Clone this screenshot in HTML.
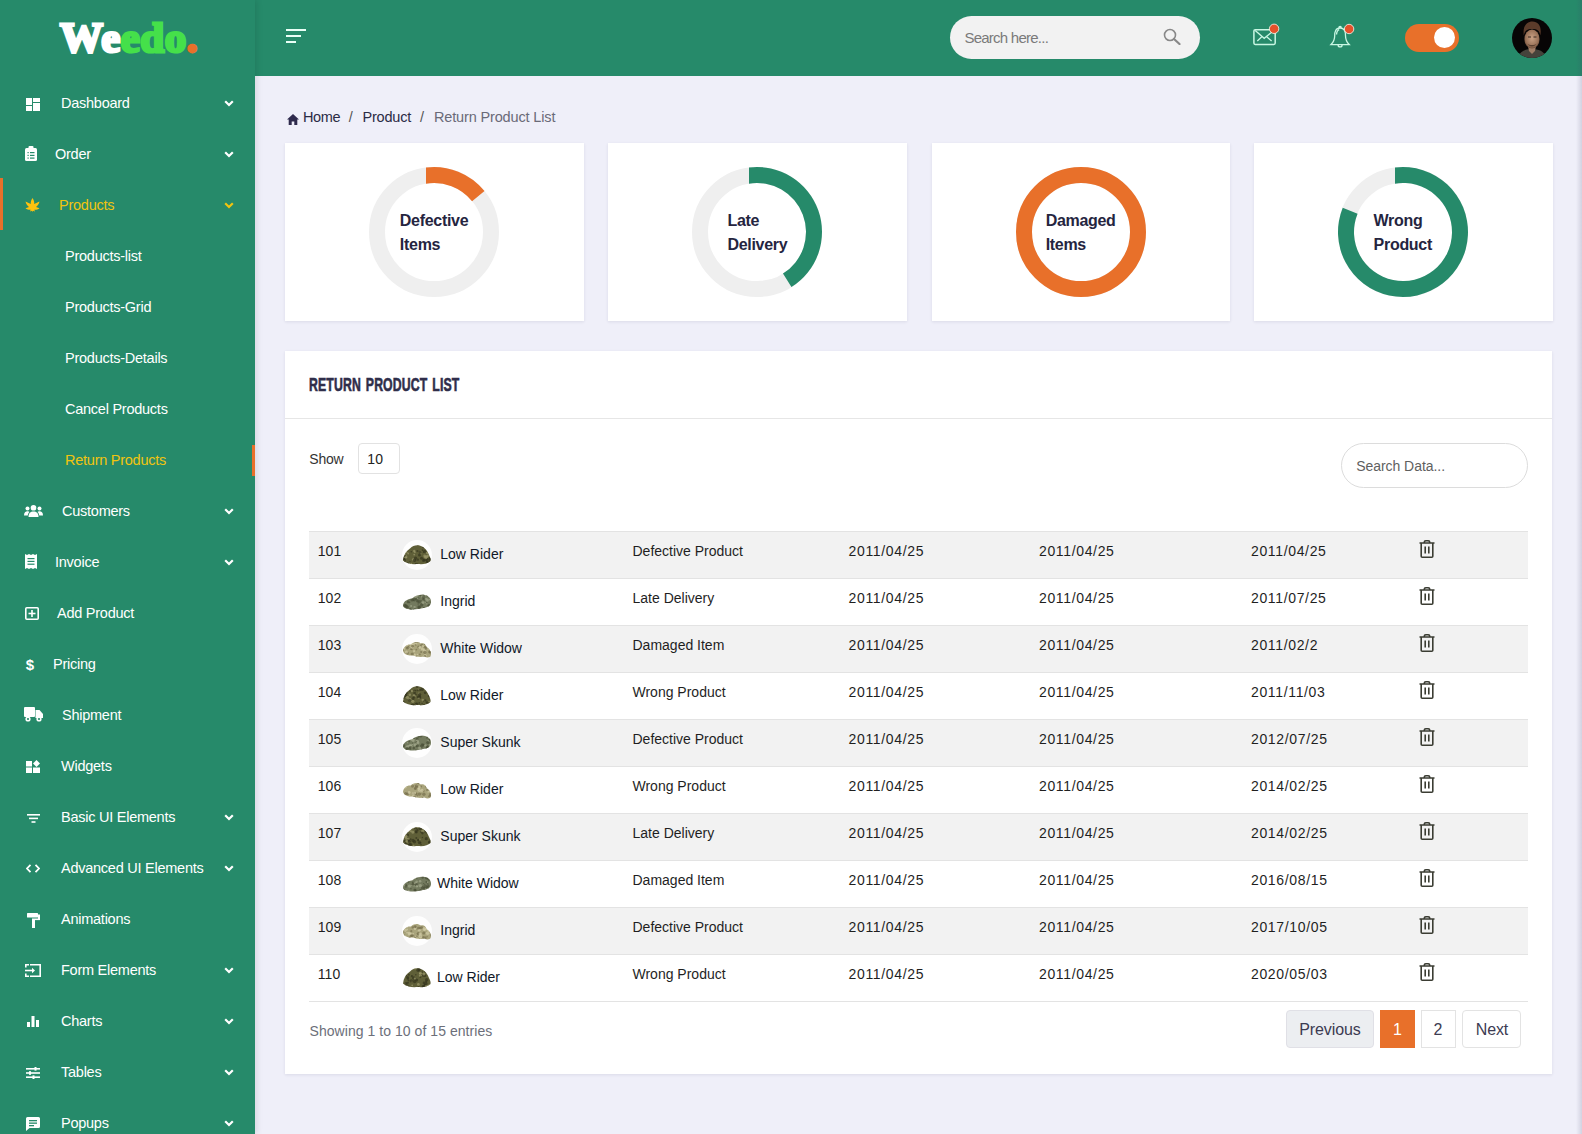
<!DOCTYPE html><html><head><meta charset="utf-8"><style>
*{margin:0;padding:0;box-sizing:border-box}
html,body{width:1582px;height:1134px;overflow:hidden;background:#efeff9;font-family:"Liberation Sans",sans-serif}
.abs,.t,.ic,.card{position:absolute}
.t{line-height:1;white-space:nowrap}
#side{position:absolute;left:0;top:0;width:255px;height:1134px;background:#268a6a;box-shadow:2px 0 6px rgba(0,0,0,0.10);z-index:2}
#head{position:absolute;left:255px;top:0;width:1327px;height:76px;background:#268a6a}
#head + *{}
.card{background:#fff;box-shadow:0 1px 3px rgba(40,40,80,0.10)}
.logo{position:absolute;left:60px;top:16px;font-family:"Liberation Serif",serif;font-weight:700;font-size:43px;line-height:1;white-space:nowrap;transform-origin:0 0;letter-spacing:0.5px}
.logo span{-webkit-text-stroke:3px currentColor}
.dl{font-size:16px;font-weight:700;color:#25253f;line-height:24px;letter-spacing:-0.3px}
.title{font-size:17.5px;font-weight:700;color:#2f2e4a;line-height:1;transform:scaleX(0.70);transform-origin:0 0;letter-spacing:0.2px;word-spacing:2px;-webkit-text-stroke:0.6px #2f2e4a}
</style></head><body><div id="side">
<div class="logo"><span style="color:#fff">We</span><span style="color:#45e04a">edo</span><span style="color:#e8702a">.</span></div>
<div class="t" style="left:61.0px;top:95.83px;font-size:14.5px;color:#ffffff;font-weight:400;letter-spacing:-0.25px;font-family:"Liberation Sans", sans-serif;-webkit-text-stroke:0.65px #ffffff;">Dashboard</div>
<svg class="ic" width="14" height="13" viewBox="0 0 14 13" style="left:26px;top:98px"><rect x="0" y="0" width="6" height="7" fill="#fff"/><rect x="7" y="0" width="7" height="4" fill="#fff"/><rect x="0" y="8" width="6" height="5" fill="#fff"/><rect x="7" y="5" width="7" height="8" fill="#fff"/></svg>
<svg class="ic" width="10" height="7" viewBox="0 0 10 7" style="left:223.5px;top:99.5px"><path d="M1.2 1.2 L5 5 L8.8 1.2" fill="none" stroke="#ffffff" stroke-width="2.2"/></svg>
<div class="t" style="left:55.0px;top:146.83px;font-size:14.5px;color:#ffffff;font-weight:400;letter-spacing:-0.25px;font-family:"Liberation Sans", sans-serif;-webkit-text-stroke:0.65px #ffffff;">Order</div>
<svg class="ic" width="12" height="15" viewBox="0 0 12 15" style="left:24.5px;top:146px"><rect x="0" y="2" width="12" height="13" rx="1.5" fill="#fff"/><rect x="3.5" y="0" width="5" height="3.5" rx="1" fill="#fff"/><g fill="#268a6a"><rect x="2.5" y="6" width="1.2" height="1.2"/><rect x="5" y="6" width="4.5" height="1.2"/><rect x="2.5" y="8.8" width="1.2" height="1.2"/><rect x="5" y="8.8" width="4.5" height="1.2"/><rect x="2.5" y="11.5" width="1.2" height="1.2"/><rect x="5" y="11.5" width="4.5" height="1.2"/></g></svg>
<svg class="ic" width="10" height="7" viewBox="0 0 10 7" style="left:223.5px;top:150.5px"><path d="M1.2 1.2 L5 5 L8.8 1.2" fill="none" stroke="#ffffff" stroke-width="2.2"/></svg>
<div class="t" style="left:59.0px;top:197.83px;font-size:14.5px;color:#f1c40f;font-weight:400;letter-spacing:-0.25px;font-family:"Liberation Sans", sans-serif;-webkit-text-stroke:0.65px #f1c40f;">Products</div>
<svg class="ic" width="15" height="14" viewBox="0 0 15 14" style="left:24.5px;top:197.7px"><path fill="#ffc20e" d="M7.5 0 C8.8 2 9.5 4 9.2 6 L14.5 3.5 C14 6 12.5 8 11 9 L14.5 10.2 C13 11.5 11 12 9.3 11.8 L10 13.6 L8 12.8 L7.5 14 L7 12.8 L5 13.6 L5.7 11.8 C4 12 2 11.5 0.5 10.2 L4 9 C2.5 8 1 6 0.5 3.5 L5.8 6 C5.5 4 6.2 2 7.5 0Z"/></svg>
<svg class="ic" width="10" height="7" viewBox="0 0 10 7" style="left:223.5px;top:201.5px"><path d="M1.2 1.2 L5 5 L8.8 1.2" fill="none" stroke="#f1c40f" stroke-width="2.2"/></svg>
<div class="abs" style="left:0;top:178px;width:3px;height:52px;background:#e8702a"></div>
<div class="t" style="left:65.0px;top:248.83px;font-size:14.5px;color:#ffffff;font-weight:400;letter-spacing:-0.25px;font-family:"Liberation Sans", sans-serif;-webkit-text-stroke:0.65px #ffffff;">Products-list</div>
<div class="t" style="left:65.0px;top:299.83px;font-size:14.5px;color:#ffffff;font-weight:400;letter-spacing:-0.25px;font-family:"Liberation Sans", sans-serif;-webkit-text-stroke:0.65px #ffffff;">Products-Grid</div>
<div class="t" style="left:65.0px;top:350.83px;font-size:14.5px;color:#ffffff;font-weight:400;letter-spacing:-0.25px;font-family:"Liberation Sans", sans-serif;-webkit-text-stroke:0.65px #ffffff;">Products-Details</div>
<div class="t" style="left:65.0px;top:401.83px;font-size:14.5px;color:#ffffff;font-weight:400;letter-spacing:-0.25px;font-family:"Liberation Sans", sans-serif;-webkit-text-stroke:0.65px #ffffff;">Cancel Products</div>
<div class="t" style="left:65.0px;top:452.83px;font-size:14.5px;color:#f1c40f;font-weight:400;letter-spacing:-0.25px;font-family:"Liberation Sans", sans-serif;-webkit-text-stroke:0.65px #f1c40f;">Return Products</div>
<div class="abs" style="left:252px;top:445px;width:3px;height:31px;background:#e8702a"></div>
<div class="t" style="left:62.0px;top:503.83px;font-size:14.5px;color:#ffffff;font-weight:400;letter-spacing:-0.25px;font-family:"Liberation Sans", sans-serif;-webkit-text-stroke:0.65px #ffffff;">Customers</div>
<svg class="ic" width="19" height="12" viewBox="0 0 19 12" style="left:24px;top:505px"><g fill="#fff"><circle cx="9.5" cy="2.8" r="2.8"/><circle cx="3.5" cy="3.5" r="2"/><circle cx="15.5" cy="3.5" r="2"/><path d="M4.5 12 C4.5 8 6.5 6.5 9.5 6.5 C12.5 6.5 14.5 8 14.5 12Z"/><path d="M0 10.5 C0 7.5 1.5 6.3 3.5 6.3 C4.5 6.3 5 6.6 5.5 7 C4.3 8 3.8 9.5 3.8 10.5Z"/><path d="M19 10.5 C19 7.5 17.5 6.3 15.5 6.3 C14.5 6.3 14 6.6 13.5 7 C14.7 8 15.2 9.5 15.2 10.5Z"/></g></svg>
<svg class="ic" width="10" height="7" viewBox="0 0 10 7" style="left:223.5px;top:507.5px"><path d="M1.2 1.2 L5 5 L8.8 1.2" fill="none" stroke="#ffffff" stroke-width="2.2"/></svg>
<div class="t" style="left:55.0px;top:554.83px;font-size:14.5px;color:#ffffff;font-weight:400;letter-spacing:-0.25px;font-family:"Liberation Sans", sans-serif;-webkit-text-stroke:0.65px #ffffff;">Invoice</div>
<svg class="ic" width="12" height="15" viewBox="0 0 12 15" style="left:24.5px;top:554.3px"><path fill="#fff" d="M0 0 L2 1 L4 0 L6 1 L8 0 L10 1 L12 0 L12 15 L10 14 L8 15 L6 14 L4 15 L2 14 L0 15Z"/><g fill="#268a6a"><rect x="2.5" y="4" width="7" height="1.2"/><rect x="2.5" y="6.8" width="7" height="1.2"/><rect x="2.5" y="9.6" width="7" height="1.2"/></g></svg>
<svg class="ic" width="10" height="7" viewBox="0 0 10 7" style="left:223.5px;top:558.5px"><path d="M1.2 1.2 L5 5 L8.8 1.2" fill="none" stroke="#ffffff" stroke-width="2.2"/></svg>
<div class="t" style="left:57.0px;top:605.83px;font-size:14.5px;color:#ffffff;font-weight:400;letter-spacing:-0.25px;font-family:"Liberation Sans", sans-serif;-webkit-text-stroke:0.65px #ffffff;">Add Product</div>
<svg class="ic" width="14" height="13" viewBox="0 0 14 13" style="left:24.5px;top:606.7px"><rect x="0.8" y="0.8" width="12.4" height="11.4" rx="1" fill="none" stroke="#fff" stroke-width="1.6"/><rect x="6.2" y="3" width="1.6" height="7" fill="#fff"/><rect x="3.5" y="5.7" width="7" height="1.6" fill="#fff"/></svg>
<div class="t" style="left:53.0px;top:656.83px;font-size:14.5px;color:#ffffff;font-weight:400;letter-spacing:-0.25px;font-family:"Liberation Sans", sans-serif;-webkit-text-stroke:0.65px #ffffff;">Pricing</div>
<svg class="ic" width="10" height="14" viewBox="0 0 10 14" style="left:24.5px;top:657px"><text x="5" y="12.5" text-anchor="middle" font-family="Liberation Sans" font-weight="700" font-size="15" fill="#fff">$</text></svg>
<div class="t" style="left:62.0px;top:707.83px;font-size:14.5px;color:#ffffff;font-weight:400;letter-spacing:-0.25px;font-family:"Liberation Sans", sans-serif;-webkit-text-stroke:0.65px #ffffff;">Shipment</div>
<svg class="ic" width="19" height="15" viewBox="0 0 19 15" style="left:24px;top:707.2px"><g fill="#fff"><rect x="0" y="0" width="11" height="10" rx="1"/><path d="M11.5 3 L15.5 3 L19 7 L19 11 L11.5 11Z"/><circle cx="4" cy="12" r="2.6"/><circle cx="15" cy="12" r="2.6"/></g><circle cx="4" cy="12" r="1.1" fill="#268a6a"/><circle cx="15" cy="12" r="1.1" fill="#268a6a"/></svg>
<div class="t" style="left:61.0px;top:758.83px;font-size:14.5px;color:#ffffff;font-weight:400;letter-spacing:-0.25px;font-family:"Liberation Sans", sans-serif;-webkit-text-stroke:0.65px #ffffff;">Widgets</div>
<svg class="ic" width="14" height="13" viewBox="0 0 14 13" style="left:26px;top:760px"><g fill="#fff"><rect x="0" y="1" width="6" height="5.5"/><rect x="0" y="7.5" width="6" height="5.5"/><rect x="7" y="7.5" width="7" height="5.5"/><path d="M10.5 0 L14 3.5 L10.5 7 L7 3.5Z"/></g></svg>
<div class="t" style="left:61.0px;top:809.83px;font-size:14.5px;color:#ffffff;font-weight:400;letter-spacing:-0.25px;font-family:"Liberation Sans", sans-serif;-webkit-text-stroke:0.65px #ffffff;">Basic UI Elements</div>
<svg class="ic" width="13" height="9" viewBox="0 0 13 9" style="left:26.5px;top:813.6px"><g fill="#fff"><rect x="0" y="0" width="13" height="1.6"/><rect x="2" y="3.6" width="9" height="1.6"/><rect x="4.5" y="7.2" width="4" height="1.6"/></g></svg>
<svg class="ic" width="10" height="7" viewBox="0 0 10 7" style="left:223.5px;top:813.5px"><path d="M1.2 1.2 L5 5 L8.8 1.2" fill="none" stroke="#ffffff" stroke-width="2.2"/></svg>
<div class="t" style="left:61.0px;top:860.83px;font-size:14.5px;color:#ffffff;font-weight:400;letter-spacing:-0.25px;font-family:"Liberation Sans", sans-serif;-webkit-text-stroke:0.65px #ffffff;">Advanced UI Elements</div>
<svg class="ic" width="14" height="9" viewBox="0 0 14 9" style="left:26px;top:864.3px"><path d="M4.5 0.8 L1 4.5 L4.5 8.2 M9.5 0.8 L13 4.5 L9.5 8.2" fill="none" stroke="#fff" stroke-width="1.8"/></svg>
<svg class="ic" width="10" height="7" viewBox="0 0 10 7" style="left:223.5px;top:864.5px"><path d="M1.2 1.2 L5 5 L8.8 1.2" fill="none" stroke="#ffffff" stroke-width="2.2"/></svg>
<div class="t" style="left:61.0px;top:911.83px;font-size:14.5px;color:#ffffff;font-weight:400;letter-spacing:-0.25px;font-family:"Liberation Sans", sans-serif;-webkit-text-stroke:0.65px #ffffff;">Animations</div>
<svg class="ic" width="13" height="15" viewBox="0 0 13 15" style="left:26.8px;top:912.6px"><g fill="#fff"><rect x="0" y="0" width="11" height="4.5" rx="0.5"/><rect x="11" y="1.5" width="2" height="5"/><rect x="5" y="5.5" width="8" height="1.6"/><rect x="5" y="6" width="3" height="9"/></g></svg>
<div class="t" style="left:61.0px;top:962.83px;font-size:14.5px;color:#ffffff;font-weight:400;letter-spacing:-0.25px;font-family:"Liberation Sans", sans-serif;-webkit-text-stroke:0.65px #ffffff;">Form Elements</div>
<svg class="ic" width="16" height="13" viewBox="0 0 16 13" style="left:25px;top:964px"><path d="M5 0.8 L15.2 0.8 L15.2 12.2 L5 12.2 M0.8 3.5 L0.8 0.8 L4 0.8 M0.8 9.5 L0.8 12.2 L4 12.2" fill="none" stroke="#fff" stroke-width="1.6"/><path d="M0 6.5 L8 6.5" stroke="#fff" stroke-width="1.6"/><path d="M7 3.8 L10 6.5 L7 9.2Z" fill="#fff"/></svg>
<svg class="ic" width="10" height="7" viewBox="0 0 10 7" style="left:223.5px;top:966.5px"><path d="M1.2 1.2 L5 5 L8.8 1.2" fill="none" stroke="#ffffff" stroke-width="2.2"/></svg>
<div class="t" style="left:61.0px;top:1013.83px;font-size:14.5px;color:#ffffff;font-weight:400;letter-spacing:-0.25px;font-family:"Liberation Sans", sans-serif;-webkit-text-stroke:0.65px #ffffff;">Charts</div>
<svg class="ic" width="13" height="11" viewBox="0 0 13 11" style="left:26.8px;top:1016.3px"><g fill="#fff"><rect x="0" y="6" width="3" height="5"/><rect x="4.5" y="0" width="3" height="11"/><rect x="9" y="4" width="3" height="7"/></g></svg>
<svg class="ic" width="10" height="7" viewBox="0 0 10 7" style="left:223.5px;top:1017.5px"><path d="M1.2 1.2 L5 5 L8.8 1.2" fill="none" stroke="#ffffff" stroke-width="2.2"/></svg>
<div class="t" style="left:61.0px;top:1064.83px;font-size:14.5px;color:#ffffff;font-weight:400;letter-spacing:-0.25px;font-family:"Liberation Sans", sans-serif;-webkit-text-stroke:0.65px #ffffff;">Tables</div>
<svg class="ic" width="14" height="12" viewBox="0 0 14 12" style="left:26px;top:1067.3px"><g fill="#fff"><rect x="0" y="1" width="14" height="1.6"/><rect x="0" y="5.2" width="14" height="1.6"/><rect x="0" y="9.4" width="14" height="1.6"/><rect x="8.5" y="0" width="2" height="3.6"/><rect x="3" y="4.2" width="2" height="3.6"/><rect x="6.5" y="8.4" width="2" height="3.6"/></g></svg>
<svg class="ic" width="10" height="7" viewBox="0 0 10 7" style="left:223.5px;top:1068.5px"><path d="M1.2 1.2 L5 5 L8.8 1.2" fill="none" stroke="#ffffff" stroke-width="2.2"/></svg>
<div class="t" style="left:61.0px;top:1115.83px;font-size:14.5px;color:#ffffff;font-weight:400;letter-spacing:-0.25px;font-family:"Liberation Sans", sans-serif;-webkit-text-stroke:0.65px #ffffff;">Popups</div>
<svg class="ic" width="14" height="14" viewBox="0 0 14 14" style="left:26px;top:1116.9px"><path fill="#fff" d="M1.5 0 L12.5 0 Q14 0 14 1.5 L14 9.5 Q14 11 12.5 11 L3.5 11 L0 14 L0 1.5 Q0 0 1.5 0Z"/><g fill="#268a6a"><rect x="3" y="3" width="8" height="1.3"/><rect x="3" y="5.5" width="8" height="1.3"/><rect x="3" y="8" width="5" height="1.3"/></g></svg>
<svg class="ic" width="10" height="7" viewBox="0 0 10 7" style="left:223.5px;top:1119.5px"><path d="M1.2 1.2 L5 5 L8.8 1.2" fill="none" stroke="#ffffff" stroke-width="2.2"/></svg>
</div>
<div id="head">
<div class="abs" style="left:31px;top:29px;width:20px;height:2px;background:#e9fff6"></div>
<div class="abs" style="left:31px;top:35px;width:15px;height:2px;background:#e9fff6"></div>
<div class="abs" style="left:31px;top:41px;width:10px;height:2px;background:#e9fff6"></div>
</div>
<div class="abs" style="left:950px;top:16px;width:250px;height:43px;border-radius:22px;background:#f2f2f2"></div>
<div class="t" style="left:964.4px;top:30.20px;font-size:15px;color:#7a7a7a;font-weight:400;letter-spacing:-0.75px;font-family:"Liberation Sans", sans-serif;">Search here...</div>
<svg class="ic" width="18" height="17" viewBox="0 0 18 17" style="left:1163px;top:28px"><circle cx="7" cy="7" r="5.5" fill="none" stroke="#888" stroke-width="1.6"/><path d="M11 11 L16.5 16" stroke="#888" stroke-width="2.2" stroke-linecap="round"/></svg>
<svg class="ic" width="30" height="30" viewBox="0 0 30 30" style="left:1250px;top:22px"><rect x="3.9" y="7.8" width="21.3" height="14.6" rx="1.3" fill="none" stroke="#c9f7e3" stroke-width="1.5"/><path d="M5.2 8.6 L14.2 16.3 L22 10 M7.3 19 L11.8 14.8 M21.6 19 L16.7 14.8" fill="none" stroke="#c9f7e3" stroke-width="1.3"/><circle cx="24.1" cy="6.8" r="4.7" fill="#e5512a" stroke="#f3eadf" stroke-width="0.9"/></svg>
<svg class="ic" width="30" height="30" viewBox="0 0 30 30" style="left:1326px;top:22px"><path d="M12.9 6 C12.9 3.8 15.3 3.8 15.3 6 M14.1 6 C9.5 6 8.7 10 8.7 13.5 C8.7 17 7.8 20 5 22.6 L23.2 22.6 C20.4 20 19.5 17 19.5 13.5 C19.5 10 18.7 6 14.1 6Z M12.1 23 C12.1 25.6 16.1 25.6 16.1 23 M10.6 12.5 C10.6 9.8 11.6 8.2 13.2 7.6" fill="none" stroke="#c9f7e3" stroke-width="1.3"/><circle cx="23.1" cy="7" r="4.7" fill="#e5512a" stroke="#f3eadf" stroke-width="0.9"/></svg>
<div class="abs" style="left:1405px;top:24px;width:54px;height:28px;border-radius:14px;background:#e8702a"></div>
<div class="abs" style="left:1434px;top:27px;width:21px;height:21px;border-radius:50%;background:#fff"></div>
<svg class="ic" width="40" height="40" viewBox="0 0 40 40" style="left:1512px;top:18px"><defs><clipPath id="av"><circle cx="20" cy="20" r="20"/></clipPath><radialGradient id="fc" cx="0.5" cy="0.45" r="0.6"><stop offset="0" stop-color="#c9a184"/><stop offset="0.7" stop-color="#9a7258"/><stop offset="1" stop-color="#5a3e2e"/></radialGradient></defs><g clip-path="url(#av)"><rect width="40" height="40" fill="#070505"/><path d="M5 42 C7 33 13 31 20 31 C27 31 33 33 35 42Z" fill="#45423b"/><path d="M16 28 L24 28 L23 33 L20 36 L17 33Z" fill="#a07d66"/><ellipse cx="20" cy="21" rx="7.6" ry="9.6" fill="url(#fc)"/><path d="M11.8 17.5 C10.5 8.5 14.5 3.5 20.5 3.5 C26.5 3.5 30 8.5 28.3 17.5 C27.5 12.5 25.5 11 20 11 C15 11 12.8 12.5 11.8 17.5Z" fill="#5b3b2a"/><path d="M15.5 25.5 C17 29.5 23 29.5 24.5 25.5 C23 27.5 17 27.5 15.5 25.5Z" fill="#5a4030"/><rect x="16" y="18.5" width="3" height="1" fill="#3a2a20"/><rect x="21.5" y="18.5" width="3" height="1" fill="#3a2a20"/></g></svg>
<svg class="ic" width="12" height="11" viewBox="0 0 12 11" style="left:286.5px;top:113.5px"><path d="M6 0 L12 5.5 L10.3 5.5 L10.3 11 L7.3 11 L7.3 7.5 L4.7 7.5 L4.7 11 L1.7 11 L1.7 5.5 L0 5.5Z" fill="#2e2a4d"/></svg>
<div class="t" style="left:302.9px;top:109.73px;font-size:14.5px;color:#2b2b45;font-weight:400;letter-spacing:-0.3px;font-family:"Liberation Sans", sans-serif;">Home</div>
<div class="t" style="left:348.7px;top:109.73px;font-size:14.5px;color:#555;font-weight:400;letter-spacing:0px;font-family:"Liberation Sans", sans-serif;">/</div>
<div class="t" style="left:362.5px;top:109.73px;font-size:14.5px;color:#2b2b45;font-weight:400;letter-spacing:-0.2px;font-family:"Liberation Sans", sans-serif;">Product</div>
<div class="t" style="left:420.0px;top:109.73px;font-size:14.5px;color:#555;font-weight:400;letter-spacing:0px;font-family:"Liberation Sans", sans-serif;">/</div>
<div class="t" style="left:434.0px;top:109.73px;font-size:14.5px;color:#6a6a78;font-weight:400;letter-spacing:-0.15px;font-family:"Liberation Sans", sans-serif;">Return Product List</div>
<div class="card" style="left:285px;top:143px;width:298.75px;height:178px"></div>
<svg class="ic" width="140" height="140" viewBox="0 0 140 140" style="left:364.10px;top:162px"><circle cx="70" cy="70" r="57" fill="none" stroke="#efefef" stroke-width="16"/><path d="M62.00 5.49 A65 65 0 0 1 120.51 29.09 L108.08 39.16 A49 49 0 0 0 62.00 21.66 Z" fill="#e8702a"/></svg>
<div class="t dl" style="left:354.1px;top:208.5px;width:160px;text-align:center"><div style="display:inline-block;text-align:left">Defective<br>Items</div></div>
<div class="card" style="left:608.25px;top:143px;width:298.75px;height:178px"></div>
<svg class="ic" width="140" height="140" viewBox="0 0 140 140" style="left:687.35px;top:162px"><circle cx="70" cy="70" r="57" fill="none" stroke="#efefef" stroke-width="16"/><path d="M62.00 5.49 A65 65 0 0 1 104.44 125.12 L95.97 111.55 A49 49 0 0 0 62.00 21.66 Z" fill="#268a6a"/></svg>
<div class="t dl" style="left:677.4px;top:208.5px;width:160px;text-align:center"><div style="display:inline-block;text-align:left">Late<br>Delivery</div></div>
<div class="card" style="left:931.5px;top:143px;width:298.75px;height:178px"></div>
<svg class="ic" width="140" height="140" viewBox="0 0 140 140" style="left:1010.60px;top:162px"><circle cx="70" cy="70" r="57" fill="none" stroke="#efefef" stroke-width="16"/><circle cx="70" cy="70" r="57" fill="none" stroke="#e8702a" stroke-width="16"/></svg>
<div class="t dl" style="left:1000.6px;top:208.5px;width:160px;text-align:center"><div style="display:inline-block;text-align:left">Damaged<br>Items</div></div>
<div class="card" style="left:1253.75px;top:143px;width:298.75px;height:178px"></div>
<svg class="ic" width="140" height="140" viewBox="0 0 140 140" style="left:1332.85px;top:162px"><circle cx="70" cy="70" r="57" fill="none" stroke="#efefef" stroke-width="16"/><path d="M62.00 5.49 A65 65 0 1 1 9.73 45.65 L24.57 51.64 A49 49 0 1 0 62.00 21.66 Z" fill="#268a6a"/></svg>
<div class="t dl" style="left:1322.8px;top:208.5px;width:160px;text-align:center"><div style="display:inline-block;text-align:left">Wrong<br>Product</div></div>
<div class="card" style="left:285px;top:351px;width:1267px;height:723px"></div>
<div class="t title" style="left:309.3px;top:377.2px">RETURN PRODUCT LIST</div>
<div class="abs" style="left:285px;top:418px;width:1267px;height:1px;background:#e6e6e6"></div>
<div class="t" style="left:309.3px;top:451.95px;font-size:14px;color:#333;font-weight:400;letter-spacing:-0.2px;font-family:"Liberation Sans", sans-serif;">Show</div>
<div class="abs" style="left:358px;top:443px;width:42px;height:31px;border:1px solid #e2e2e2;border-radius:4px;background:#fff"></div>
<div class="t" style="left:367.2px;top:451.95px;font-size:14px;color:#222;font-weight:400;letter-spacing:0.3px;font-family:"Liberation Sans", sans-serif;">10</div>
<div class="abs" style="left:1341px;top:443px;width:187px;height:45px;border:1px solid #dcdcdc;border-radius:23px;background:#fff"></div>
<div class="t" style="left:1356.2px;top:459.25px;font-size:14px;color:#5f5f5f;font-weight:400;letter-spacing:-0.05px;font-family:"Liberation Sans", sans-serif;">Search Data...</div>
<div class="abs" style="left:309px;top:531px;width:1219px;height:1px;background:#e3e3e3"></div>
<div class="abs" style="left:309px;top:532px;width:1219px;height:46px;background:#f2f2f2"></div>
<div class="t" style="left:317.7px;top:544.15px;font-size:14px;color:#1f1f1f;font-weight:400;letter-spacing:0.1px;font-family:"Liberation Sans", sans-serif;">101</div>
<svg class="ic" width="30" height="30" viewBox="0 0 30 30" style="left:402px;top:540px"><circle cx="15" cy="15" r="15" fill="#fff" opacity="0.9"/><defs><clipPath id="cbdark540"><path d="M1 20.5 C1.5 15 4 11 8 8.5 C11 5.5 15 4.5 19 6 C23 7.5 25.5 11 27 15 C28 17 29 19 28.5 21 C26 23.5 22 24.5 16 24 C10 24.5 5 24 1 20.5Z"/></clipPath></defs><path d="M1 20.5 C1.5 15 4 11 8 8.5 C11 5.5 15 4.5 19 6 C23 7.5 25.5 11 27 15 C28 17 29 19 28.5 21 C26 23.5 22 24.5 16 24 C10 24.5 5 24 1 20.5Z" fill="#5f5f38"/><g clip-path="url(#cbdark540)"><circle cx="25.5" cy="22.1" r="1.1" fill="#34341e" opacity="0.7"/><circle cx="1.6" cy="4.3" r="1.7" fill="#34341e" opacity="0.7"/><circle cx="21.5" cy="6.9" r="1.4" fill="#34341e" opacity="0.7"/><circle cx="25.3" cy="22.6" r="1.6" fill="#34341e" opacity="0.7"/><circle cx="17.2" cy="12.1" r="0.6" fill="#9c9a6c" opacity="0.7"/><circle cx="28.2" cy="19.4" r="1.0" fill="#34341e" opacity="0.7"/><circle cx="1.7" cy="18.3" r="1.5" fill="#34341e" opacity="0.7"/><circle cx="1.4" cy="21.2" r="1.3" fill="#34341e" opacity="0.7"/><circle cx="23.0" cy="24.5" r="1.3" fill="#34341e" opacity="0.7"/><circle cx="22.6" cy="15.9" r="1.3" fill="#9c9a6c" opacity="0.7"/><circle cx="3.5" cy="4.1" r="1.0" fill="#9c9a6c" opacity="0.7"/><circle cx="21.6" cy="20.4" r="1.6" fill="#34341e" opacity="0.7"/><circle cx="5.2" cy="12.7" r="0.6" fill="#9c9a6c" opacity="0.7"/><circle cx="18.5" cy="11.8" r="1.2" fill="#9c9a6c" opacity="0.7"/><circle cx="20.5" cy="10.1" r="0.9" fill="#34341e" opacity="0.7"/><circle cx="9.3" cy="11.8" r="0.8" fill="#34341e" opacity="0.7"/><circle cx="7.9" cy="21.4" r="0.6" fill="#34341e" opacity="0.7"/><circle cx="5.6" cy="24.0" r="1.7" fill="#34341e" opacity="0.7"/><circle cx="24.6" cy="18.5" r="1.5" fill="#34341e" opacity="0.7"/><circle cx="12.2" cy="14.6" r="0.9" fill="#9c9a6c" opacity="0.7"/><circle cx="5.6" cy="6.4" r="0.9" fill="#9c9a6c" opacity="0.7"/><circle cx="18.8" cy="13.7" r="0.8" fill="#9c9a6c" opacity="0.7"/><circle cx="23.6" cy="17.4" r="1.7" fill="#9c9a6c" opacity="0.7"/><circle cx="2.0" cy="9.7" r="0.7" fill="#34341e" opacity="0.7"/><circle cx="12.8" cy="12.0" r="1.1" fill="#9c9a6c" opacity="0.7"/><circle cx="21.6" cy="12.3" r="0.7" fill="#34341e" opacity="0.7"/><circle cx="2.2" cy="20.1" r="1.8" fill="#34341e" opacity="0.7"/><circle cx="27.8" cy="18.2" r="1.1" fill="#34341e" opacity="0.7"/><circle cx="27.6" cy="20.9" r="1.0" fill="#34341e" opacity="0.7"/><circle cx="27.9" cy="18.9" r="0.9" fill="#34341e" opacity="0.7"/><circle cx="14.3" cy="4.3" r="0.7" fill="#9c9a6c" opacity="0.7"/><circle cx="24.4" cy="5.4" r="1.6" fill="#34341e" opacity="0.7"/><circle cx="24.4" cy="20.6" r="1.2" fill="#34341e" opacity="0.7"/><circle cx="22.2" cy="19.8" r="1.3" fill="#34341e" opacity="0.7"/><circle cx="17.5" cy="15.1" r="1.5" fill="#34341e" opacity="0.7"/><circle cx="27.0" cy="11.3" r="0.7" fill="#34341e" opacity="0.7"/><circle cx="25.9" cy="19.7" r="1.1" fill="#34341e" opacity="0.7"/><circle cx="6.6" cy="8.2" r="0.7" fill="#9c9a6c" opacity="0.7"/><circle cx="6.2" cy="13.5" r="0.9" fill="#9c9a6c" opacity="0.7"/><circle cx="3.5" cy="16.4" r="1.8" fill="#9c9a6c" opacity="0.7"/><circle cx="25.4" cy="13.1" r="1.4" fill="#9c9a6c" opacity="0.7"/><circle cx="1.4" cy="21.2" r="1.1" fill="#9c9a6c" opacity="0.7"/><circle cx="3.9" cy="9.8" r="1.1" fill="#9c9a6c" opacity="0.7"/><circle cx="27.1" cy="7.7" r="1.1" fill="#34341e" opacity="0.7"/><circle cx="13.0" cy="11.1" r="0.7" fill="#34341e" opacity="0.7"/><circle cx="3.3" cy="16.2" r="1.3" fill="#34341e" opacity="0.7"/><circle cx="3.7" cy="12.1" r="1.1" fill="#9c9a6c" opacity="0.7"/><circle cx="5.4" cy="5.6" r="1.7" fill="#9c9a6c" opacity="0.7"/><circle cx="12.3" cy="10.9" r="1.2" fill="#9c9a6c" opacity="0.7"/><circle cx="11.5" cy="19.5" r="1.6" fill="#9c9a6c" opacity="0.7"/><circle cx="22.7" cy="11.3" r="1.6" fill="#34341e" opacity="0.7"/><circle cx="9.5" cy="23.5" r="0.7" fill="#9c9a6c" opacity="0.7"/><circle cx="24.3" cy="20.3" r="0.7" fill="#34341e" opacity="0.7"/><circle cx="14.8" cy="24.7" r="1.6" fill="#34341e" opacity="0.7"/><circle cx="25.9" cy="15.8" r="1.1" fill="#9c9a6c" opacity="0.7"/><circle cx="19.5" cy="18.3" r="1.5" fill="#34341e" opacity="0.7"/><circle cx="18.1" cy="12.1" r="1.6" fill="#34341e" opacity="0.7"/><circle cx="16.2" cy="5.0" r="1.0" fill="#34341e" opacity="0.7"/><circle cx="12.6" cy="20.2" r="1.7" fill="#34341e" opacity="0.7"/><circle cx="22.9" cy="24.6" r="1.5" fill="#9c9a6c" opacity="0.7"/><circle cx="3.2" cy="12.5" r="1.1" fill="#9c9a6c" opacity="0.7"/><circle cx="4.0" cy="17.3" r="1.2" fill="#9c9a6c" opacity="0.7"/><circle cx="16.8" cy="4.8" r="1.2" fill="#9c9a6c" opacity="0.7"/><circle cx="24.5" cy="16.8" r="1.7" fill="#9c9a6c" opacity="0.7"/><circle cx="15.9" cy="19.7" r="1.1" fill="#34341e" opacity="0.7"/><circle cx="15.4" cy="11.0" r="1.1" fill="#34341e" opacity="0.7"/><circle cx="2.3" cy="10.6" r="0.9" fill="#9c9a6c" opacity="0.7"/><circle cx="13.6" cy="18.2" r="1.7" fill="#34341e" opacity="0.7"/><circle cx="28.2" cy="4.2" r="0.8" fill="#9c9a6c" opacity="0.7"/><circle cx="13.5" cy="23.6" r="0.7" fill="#34341e" opacity="0.7"/></g></svg>
<div class="t" style="left:440.3px;top:547.05px;font-size:14px;color:#101828;font-weight:400;letter-spacing:0px;font-family:"Liberation Sans", sans-serif;">Low Rider</div>
<div class="t" style="left:632.5px;top:544.15px;font-size:14px;color:#1f1f1f;font-weight:400;letter-spacing:0px;font-family:"Liberation Sans", sans-serif;">Defective Product</div>
<div class="t" style="left:848.6px;top:544.15px;font-size:14px;color:#1f1f1f;font-weight:400;letter-spacing:0.65px;font-family:"Liberation Sans", sans-serif;">2011/04/25</div>
<div class="t" style="left:1039.0px;top:544.15px;font-size:14px;color:#1f1f1f;font-weight:400;letter-spacing:0.65px;font-family:"Liberation Sans", sans-serif;">2011/04/25</div>
<div class="t" style="left:1251.0px;top:544.15px;font-size:14px;color:#1f1f1f;font-weight:400;letter-spacing:0.65px;font-family:"Liberation Sans", sans-serif;">2011/04/25</div>
<svg class="ic" width="16" height="18" viewBox="0 0 16 18" style="left:1419px;top:540px"><path d="M5.3 2.6 L5.3 2 Q5.3 0.8 6.8 0.8 L9.2 0.8 Q10.7 0.8 10.7 2 L10.7 2.6 M0.5 3 L15.5 3 M2.2 3.5 L2.2 16.2 Q2.2 17.2 3.2 17.2 L12.8 17.2 Q13.8 17.2 13.8 16.2 L13.8 3.5 M6.2 6.5 L6.2 13.5 M9.8 6.5 L9.8 13.5" fill="none" stroke="#3b3d33" stroke-width="1.6"/></svg>
<div class="abs" style="left:309px;top:578px;width:1219px;height:1px;background:#e3e3e3"></div>
<div class="abs" style="left:309px;top:579px;width:1219px;height:46px;background:#ffffff"></div>
<div class="t" style="left:317.7px;top:591.15px;font-size:14px;color:#1f1f1f;font-weight:400;letter-spacing:0.1px;font-family:"Liberation Sans", sans-serif;">102</div>
<svg class="ic" width="30" height="30" viewBox="0 0 30 30" style="left:402px;top:587px"><circle cx="15" cy="15" r="15" fill="#fff" opacity="0.9"/><defs><clipPath id="cbflat587"><path d="M1 18.5 C1.5 14.5 5 12 10 11.5 C13 9 18 7 23 8 C27 9 29.5 12 29 15.5 C28.5 19 25 20.5 21 21 C16 22.5 11 23 6 22 C3 21.5 1 20.5 1 18.5Z"/></clipPath></defs><path d="M1 18.5 C1.5 14.5 5 12 10 11.5 C13 9 18 7 23 8 C27 9 29.5 12 29 15.5 C28.5 19 25 20.5 21 21 C16 22.5 11 23 6 22 C3 21.5 1 20.5 1 18.5Z" fill="#737a5e"/><g clip-path="url(#cbflat587)"><circle cx="29.6" cy="15.4" r="1.0" fill="#4a5038" opacity="0.7"/><circle cx="25.3" cy="13.1" r="1.7" fill="#a3a88c" opacity="0.7"/><circle cx="9.2" cy="8.8" r="1.5" fill="#a3a88c" opacity="0.7"/><circle cx="27.6" cy="18.5" r="1.6" fill="#4a5038" opacity="0.7"/><circle cx="16.1" cy="17.0" r="0.7" fill="#4a5038" opacity="0.7"/><circle cx="11.4" cy="13.3" r="0.8" fill="#4a5038" opacity="0.7"/><circle cx="29.8" cy="9.4" r="1.6" fill="#4a5038" opacity="0.7"/><circle cx="23.3" cy="12.9" r="1.2" fill="#4a5038" opacity="0.7"/><circle cx="10.0" cy="12.9" r="1.6" fill="#4a5038" opacity="0.7"/><circle cx="19.1" cy="13.7" r="0.7" fill="#4a5038" opacity="0.7"/><circle cx="12.6" cy="20.1" r="1.2" fill="#a3a88c" opacity="0.7"/><circle cx="20.5" cy="7.2" r="1.8" fill="#a3a88c" opacity="0.7"/><circle cx="22.0" cy="21.2" r="1.3" fill="#4a5038" opacity="0.7"/><circle cx="27.2" cy="22.3" r="0.7" fill="#4a5038" opacity="0.7"/><circle cx="20.2" cy="8.0" r="0.8" fill="#a3a88c" opacity="0.7"/><circle cx="8.2" cy="22.4" r="1.5" fill="#4a5038" opacity="0.7"/><circle cx="18.6" cy="8.1" r="1.2" fill="#4a5038" opacity="0.7"/><circle cx="11.3" cy="23.0" r="1.0" fill="#4a5038" opacity="0.7"/><circle cx="21.3" cy="21.0" r="1.0" fill="#4a5038" opacity="0.7"/><circle cx="26.6" cy="19.7" r="1.4" fill="#a3a88c" opacity="0.7"/><circle cx="4.8" cy="19.7" r="1.7" fill="#4a5038" opacity="0.7"/><circle cx="27.7" cy="12.6" r="0.8" fill="#a3a88c" opacity="0.7"/><circle cx="7.8" cy="9.8" r="1.0" fill="#a3a88c" opacity="0.7"/><circle cx="24.8" cy="16.9" r="0.7" fill="#a3a88c" opacity="0.7"/><circle cx="16.5" cy="11.2" r="0.9" fill="#4a5038" opacity="0.7"/><circle cx="15.5" cy="14.2" r="1.3" fill="#4a5038" opacity="0.7"/><circle cx="24.7" cy="7.6" r="1.0" fill="#a3a88c" opacity="0.7"/><circle cx="24.1" cy="12.3" r="1.5" fill="#a3a88c" opacity="0.7"/><circle cx="8.8" cy="7.9" r="0.6" fill="#4a5038" opacity="0.7"/><circle cx="11.5" cy="8.9" r="0.9" fill="#4a5038" opacity="0.7"/><circle cx="21.5" cy="22.9" r="1.3" fill="#4a5038" opacity="0.7"/><circle cx="14.8" cy="12.0" r="1.7" fill="#4a5038" opacity="0.7"/><circle cx="13.8" cy="9.3" r="1.7" fill="#a3a88c" opacity="0.7"/><circle cx="2.9" cy="18.5" r="1.7" fill="#4a5038" opacity="0.7"/><circle cx="19.7" cy="18.0" r="1.7" fill="#4a5038" opacity="0.7"/><circle cx="6.1" cy="14.9" r="1.4" fill="#4a5038" opacity="0.7"/><circle cx="19.3" cy="21.6" r="0.9" fill="#a3a88c" opacity="0.7"/><circle cx="6.7" cy="9.6" r="1.7" fill="#a3a88c" opacity="0.7"/><circle cx="21.4" cy="12.1" r="1.3" fill="#4a5038" opacity="0.7"/><circle cx="3.9" cy="18.8" r="1.6" fill="#4a5038" opacity="0.7"/><circle cx="21.3" cy="8.4" r="1.5" fill="#4a5038" opacity="0.7"/><circle cx="12.9" cy="21.5" r="0.7" fill="#4a5038" opacity="0.7"/><circle cx="21.1" cy="15.6" r="1.4" fill="#a3a88c" opacity="0.7"/><circle cx="17.4" cy="20.5" r="1.6" fill="#4a5038" opacity="0.7"/><circle cx="23.9" cy="15.6" r="0.7" fill="#a3a88c" opacity="0.7"/><circle cx="12.2" cy="12.8" r="1.7" fill="#4a5038" opacity="0.7"/><circle cx="25.4" cy="8.1" r="1.4" fill="#4a5038" opacity="0.7"/><circle cx="20.5" cy="10.0" r="1.4" fill="#a3a88c" opacity="0.7"/><circle cx="23.5" cy="8.3" r="1.0" fill="#a3a88c" opacity="0.7"/><circle cx="3.7" cy="18.7" r="0.9" fill="#4a5038" opacity="0.7"/><circle cx="17.2" cy="14.7" r="1.7" fill="#4a5038" opacity="0.7"/><circle cx="2.7" cy="22.9" r="1.0" fill="#4a5038" opacity="0.7"/><circle cx="24.7" cy="15.4" r="0.7" fill="#4a5038" opacity="0.7"/><circle cx="17.1" cy="20.1" r="1.8" fill="#4a5038" opacity="0.7"/><circle cx="4.6" cy="8.4" r="0.9" fill="#4a5038" opacity="0.7"/><circle cx="26.4" cy="18.6" r="1.2" fill="#4a5038" opacity="0.7"/><circle cx="20.6" cy="21.2" r="0.7" fill="#a3a88c" opacity="0.7"/><circle cx="7.5" cy="15.3" r="0.9" fill="#4a5038" opacity="0.7"/><circle cx="10.5" cy="9.4" r="1.6" fill="#a3a88c" opacity="0.7"/><circle cx="5.5" cy="20.3" r="1.3" fill="#4a5038" opacity="0.7"/><circle cx="26.3" cy="18.6" r="0.8" fill="#4a5038" opacity="0.7"/><circle cx="19.1" cy="22.9" r="0.8" fill="#a3a88c" opacity="0.7"/><circle cx="21.2" cy="10.6" r="1.4" fill="#4a5038" opacity="0.7"/><circle cx="2.3" cy="13.9" r="1.4" fill="#4a5038" opacity="0.7"/><circle cx="15.7" cy="11.4" r="0.9" fill="#a3a88c" opacity="0.7"/><circle cx="9.1" cy="7.6" r="1.0" fill="#4a5038" opacity="0.7"/><circle cx="4.4" cy="22.5" r="0.9" fill="#4a5038" opacity="0.7"/><circle cx="24.0" cy="22.9" r="1.6" fill="#4a5038" opacity="0.7"/><circle cx="9.1" cy="19.1" r="1.0" fill="#a3a88c" opacity="0.7"/><circle cx="9.1" cy="22.9" r="1.0" fill="#4a5038" opacity="0.7"/></g></svg>
<div class="t" style="left:440.3px;top:594.05px;font-size:14px;color:#101828;font-weight:400;letter-spacing:0px;font-family:"Liberation Sans", sans-serif;">Ingrid</div>
<div class="t" style="left:632.5px;top:591.15px;font-size:14px;color:#1f1f1f;font-weight:400;letter-spacing:0px;font-family:"Liberation Sans", sans-serif;">Late Delivery</div>
<div class="t" style="left:848.6px;top:591.15px;font-size:14px;color:#1f1f1f;font-weight:400;letter-spacing:0.65px;font-family:"Liberation Sans", sans-serif;">2011/04/25</div>
<div class="t" style="left:1039.0px;top:591.15px;font-size:14px;color:#1f1f1f;font-weight:400;letter-spacing:0.65px;font-family:"Liberation Sans", sans-serif;">2011/04/25</div>
<div class="t" style="left:1251.0px;top:591.15px;font-size:14px;color:#1f1f1f;font-weight:400;letter-spacing:0.65px;font-family:"Liberation Sans", sans-serif;">2011/07/25</div>
<svg class="ic" width="16" height="18" viewBox="0 0 16 18" style="left:1419px;top:587px"><path d="M5.3 2.6 L5.3 2 Q5.3 0.8 6.8 0.8 L9.2 0.8 Q10.7 0.8 10.7 2 L10.7 2.6 M0.5 3 L15.5 3 M2.2 3.5 L2.2 16.2 Q2.2 17.2 3.2 17.2 L12.8 17.2 Q13.8 17.2 13.8 16.2 L13.8 3.5 M6.2 6.5 L6.2 13.5 M9.8 6.5 L9.8 13.5" fill="none" stroke="#3b3d33" stroke-width="1.6"/></svg>
<div class="abs" style="left:309px;top:625px;width:1219px;height:1px;background:#e3e3e3"></div>
<div class="abs" style="left:309px;top:626px;width:1219px;height:46px;background:#f2f2f2"></div>
<div class="t" style="left:317.7px;top:638.15px;font-size:14px;color:#1f1f1f;font-weight:400;letter-spacing:0.1px;font-family:"Liberation Sans", sans-serif;">103</div>
<svg class="ic" width="30" height="30" viewBox="0 0 30 30" style="left:402px;top:634px"><circle cx="15" cy="15" r="15" fill="#fff" opacity="0.9"/><defs><clipPath id="cblight634"><path d="M1 17 C1.5 12.5 5 10 9 10.5 C11 7.5 16 7 19 9.5 C21 8.5 24 10 24.5 13 C27 14.5 29.5 17.5 29 21 C28 24 25 24 22.5 22.5 C18 23.5 14 22.5 11 21.5 C7 22 2.5 21 1 17Z"/></clipPath></defs><path d="M1 17 C1.5 12.5 5 10 9 10.5 C11 7.5 16 7 19 9.5 C21 8.5 24 10 24.5 13 C27 14.5 29.5 17.5 29 21 C28 24 25 24 22.5 22.5 C18 23.5 14 22.5 11 21.5 C7 22 2.5 21 1 17Z" fill="#a9a47c"/><g clip-path="url(#cblight634)"><circle cx="27.3" cy="14.2" r="1.6" fill="#77714f" opacity="0.7"/><circle cx="5.3" cy="19.0" r="1.5" fill="#77714f" opacity="0.7"/><circle cx="3.9" cy="21.1" r="1.1" fill="#d2cca6" opacity="0.7"/><circle cx="23.1" cy="21.6" r="1.6" fill="#d2cca6" opacity="0.7"/><circle cx="21.1" cy="22.1" r="0.6" fill="#d2cca6" opacity="0.7"/><circle cx="16.2" cy="7.5" r="1.7" fill="#77714f" opacity="0.7"/><circle cx="16.7" cy="13.1" r="1.5" fill="#77714f" opacity="0.7"/><circle cx="9.8" cy="13.6" r="1.7" fill="#d2cca6" opacity="0.7"/><circle cx="9.8" cy="15.2" r="1.0" fill="#77714f" opacity="0.7"/><circle cx="1.5" cy="15.0" r="1.7" fill="#d2cca6" opacity="0.7"/><circle cx="5.2" cy="14.1" r="1.4" fill="#77714f" opacity="0.7"/><circle cx="13.8" cy="9.4" r="1.6" fill="#d2cca6" opacity="0.7"/><circle cx="11.5" cy="10.1" r="0.6" fill="#d2cca6" opacity="0.7"/><circle cx="17.3" cy="8.6" r="0.7" fill="#77714f" opacity="0.7"/><circle cx="22.7" cy="7.1" r="1.6" fill="#d2cca6" opacity="0.7"/><circle cx="1.4" cy="16.0" r="0.9" fill="#77714f" opacity="0.7"/><circle cx="27.8" cy="18.1" r="1.3" fill="#77714f" opacity="0.7"/><circle cx="13.7" cy="22.1" r="1.4" fill="#d2cca6" opacity="0.7"/><circle cx="6.4" cy="12.9" r="1.7" fill="#77714f" opacity="0.7"/><circle cx="23.0" cy="13.9" r="0.7" fill="#d2cca6" opacity="0.7"/><circle cx="14.4" cy="15.6" r="0.9" fill="#77714f" opacity="0.7"/><circle cx="22.5" cy="16.1" r="1.7" fill="#d2cca6" opacity="0.7"/><circle cx="27.9" cy="18.0" r="1.5" fill="#77714f" opacity="0.7"/><circle cx="22.7" cy="9.0" r="0.7" fill="#77714f" opacity="0.7"/><circle cx="28.5" cy="9.4" r="0.7" fill="#d2cca6" opacity="0.7"/><circle cx="22.9" cy="13.2" r="1.2" fill="#77714f" opacity="0.7"/><circle cx="29.2" cy="23.5" r="1.5" fill="#77714f" opacity="0.7"/><circle cx="19.7" cy="12.2" r="0.7" fill="#77714f" opacity="0.7"/><circle cx="12.7" cy="20.7" r="1.1" fill="#d2cca6" opacity="0.7"/><circle cx="7.3" cy="8.5" r="0.8" fill="#77714f" opacity="0.7"/><circle cx="10.7" cy="7.0" r="1.0" fill="#d2cca6" opacity="0.7"/><circle cx="5.1" cy="10.7" r="1.7" fill="#d2cca6" opacity="0.7"/><circle cx="3.9" cy="22.9" r="0.9" fill="#77714f" opacity="0.7"/><circle cx="17.9" cy="20.4" r="0.9" fill="#77714f" opacity="0.7"/><circle cx="19.5" cy="10.9" r="1.6" fill="#77714f" opacity="0.7"/><circle cx="7.3" cy="8.3" r="1.5" fill="#d2cca6" opacity="0.7"/><circle cx="8.6" cy="13.2" r="1.7" fill="#d2cca6" opacity="0.7"/><circle cx="20.3" cy="15.0" r="1.5" fill="#d2cca6" opacity="0.7"/><circle cx="23.2" cy="18.1" r="1.1" fill="#d2cca6" opacity="0.7"/><circle cx="13.8" cy="10.9" r="0.8" fill="#77714f" opacity="0.7"/><circle cx="6.7" cy="23.9" r="0.9" fill="#d2cca6" opacity="0.7"/><circle cx="22.6" cy="10.5" r="0.6" fill="#77714f" opacity="0.7"/><circle cx="2.8" cy="7.8" r="0.7" fill="#77714f" opacity="0.7"/><circle cx="22.9" cy="22.4" r="1.3" fill="#77714f" opacity="0.7"/><circle cx="10.2" cy="20.0" r="1.6" fill="#77714f" opacity="0.7"/><circle cx="18.6" cy="9.3" r="1.1" fill="#d2cca6" opacity="0.7"/><circle cx="8.9" cy="15.0" r="0.9" fill="#77714f" opacity="0.7"/><circle cx="25.9" cy="11.8" r="1.3" fill="#d2cca6" opacity="0.7"/><circle cx="23.7" cy="14.9" r="0.9" fill="#77714f" opacity="0.7"/><circle cx="25.5" cy="11.4" r="1.3" fill="#77714f" opacity="0.7"/><circle cx="10.1" cy="10.0" r="1.4" fill="#d2cca6" opacity="0.7"/><circle cx="16.4" cy="8.7" r="0.8" fill="#d2cca6" opacity="0.7"/><circle cx="24.6" cy="13.3" r="1.4" fill="#77714f" opacity="0.7"/><circle cx="17.3" cy="13.7" r="1.0" fill="#d2cca6" opacity="0.7"/><circle cx="19.1" cy="18.1" r="1.0" fill="#77714f" opacity="0.7"/><circle cx="15.4" cy="20.5" r="0.8" fill="#d2cca6" opacity="0.7"/><circle cx="22.9" cy="18.3" r="1.6" fill="#77714f" opacity="0.7"/><circle cx="22.1" cy="8.5" r="1.1" fill="#77714f" opacity="0.7"/><circle cx="11.0" cy="23.8" r="1.7" fill="#d2cca6" opacity="0.7"/><circle cx="14.5" cy="22.1" r="0.9" fill="#77714f" opacity="0.7"/><circle cx="10.5" cy="12.3" r="1.4" fill="#77714f" opacity="0.7"/><circle cx="4.5" cy="18.1" r="1.5" fill="#d2cca6" opacity="0.7"/><circle cx="26.7" cy="14.8" r="1.3" fill="#d2cca6" opacity="0.7"/><circle cx="6.4" cy="7.2" r="1.1" fill="#77714f" opacity="0.7"/><circle cx="23.3" cy="7.2" r="0.7" fill="#77714f" opacity="0.7"/><circle cx="20.7" cy="12.2" r="1.2" fill="#d2cca6" opacity="0.7"/><circle cx="13.7" cy="7.6" r="1.5" fill="#77714f" opacity="0.7"/><circle cx="18.0" cy="13.4" r="1.3" fill="#d2cca6" opacity="0.7"/><circle cx="7.9" cy="13.3" r="0.7" fill="#77714f" opacity="0.7"/><circle cx="12.1" cy="17.2" r="1.1" fill="#d2cca6" opacity="0.7"/></g></svg>
<div class="t" style="left:440.3px;top:641.05px;font-size:14px;color:#101828;font-weight:400;letter-spacing:0px;font-family:"Liberation Sans", sans-serif;">White Widow</div>
<div class="t" style="left:632.5px;top:638.15px;font-size:14px;color:#1f1f1f;font-weight:400;letter-spacing:0px;font-family:"Liberation Sans", sans-serif;">Damaged Item</div>
<div class="t" style="left:848.6px;top:638.15px;font-size:14px;color:#1f1f1f;font-weight:400;letter-spacing:0.65px;font-family:"Liberation Sans", sans-serif;">2011/04/25</div>
<div class="t" style="left:1039.0px;top:638.15px;font-size:14px;color:#1f1f1f;font-weight:400;letter-spacing:0.65px;font-family:"Liberation Sans", sans-serif;">2011/04/25</div>
<div class="t" style="left:1251.0px;top:638.15px;font-size:14px;color:#1f1f1f;font-weight:400;letter-spacing:0.65px;font-family:"Liberation Sans", sans-serif;">2011/02/2</div>
<svg class="ic" width="16" height="18" viewBox="0 0 16 18" style="left:1419px;top:634px"><path d="M5.3 2.6 L5.3 2 Q5.3 0.8 6.8 0.8 L9.2 0.8 Q10.7 0.8 10.7 2 L10.7 2.6 M0.5 3 L15.5 3 M2.2 3.5 L2.2 16.2 Q2.2 17.2 3.2 17.2 L12.8 17.2 Q13.8 17.2 13.8 16.2 L13.8 3.5 M6.2 6.5 L6.2 13.5 M9.8 6.5 L9.8 13.5" fill="none" stroke="#3b3d33" stroke-width="1.6"/></svg>
<div class="abs" style="left:309px;top:672px;width:1219px;height:1px;background:#e3e3e3"></div>
<div class="abs" style="left:309px;top:673px;width:1219px;height:46px;background:#ffffff"></div>
<div class="t" style="left:317.7px;top:685.15px;font-size:14px;color:#1f1f1f;font-weight:400;letter-spacing:0.1px;font-family:"Liberation Sans", sans-serif;">104</div>
<svg class="ic" width="30" height="30" viewBox="0 0 30 30" style="left:402px;top:681px"><circle cx="15" cy="15" r="15" fill="#fff" opacity="0.9"/><defs><clipPath id="cbdark681"><path d="M1 20.5 C1.5 15 4 11 8 8.5 C11 5.5 15 4.5 19 6 C23 7.5 25.5 11 27 15 C28 17 29 19 28.5 21 C26 23.5 22 24.5 16 24 C10 24.5 5 24 1 20.5Z"/></clipPath></defs><path d="M1 20.5 C1.5 15 4 11 8 8.5 C11 5.5 15 4.5 19 6 C23 7.5 25.5 11 27 15 C28 17 29 19 28.5 21 C26 23.5 22 24.5 16 24 C10 24.5 5 24 1 20.5Z" fill="#5f5f38"/><g clip-path="url(#cbdark681)"><circle cx="11.0" cy="9.7" r="0.7" fill="#34341e" opacity="0.7"/><circle cx="20.8" cy="19.1" r="1.3" fill="#9c9a6c" opacity="0.7"/><circle cx="3.7" cy="14.4" r="1.6" fill="#34341e" opacity="0.7"/><circle cx="15.1" cy="5.6" r="1.4" fill="#34341e" opacity="0.7"/><circle cx="2.4" cy="5.2" r="1.5" fill="#34341e" opacity="0.7"/><circle cx="16.4" cy="17.4" r="0.7" fill="#9c9a6c" opacity="0.7"/><circle cx="8.0" cy="10.1" r="0.9" fill="#34341e" opacity="0.7"/><circle cx="12.4" cy="14.5" r="1.6" fill="#9c9a6c" opacity="0.7"/><circle cx="20.5" cy="4.8" r="0.9" fill="#9c9a6c" opacity="0.7"/><circle cx="13.9" cy="13.7" r="0.9" fill="#34341e" opacity="0.7"/><circle cx="18.3" cy="24.8" r="1.3" fill="#34341e" opacity="0.7"/><circle cx="11.1" cy="17.6" r="1.5" fill="#34341e" opacity="0.7"/><circle cx="1.4" cy="16.4" r="1.5" fill="#34341e" opacity="0.7"/><circle cx="10.7" cy="5.3" r="1.0" fill="#9c9a6c" opacity="0.7"/><circle cx="16.9" cy="12.6" r="1.1" fill="#9c9a6c" opacity="0.7"/><circle cx="7.7" cy="18.5" r="1.7" fill="#9c9a6c" opacity="0.7"/><circle cx="2.2" cy="24.0" r="0.7" fill="#34341e" opacity="0.7"/><circle cx="28.1" cy="12.9" r="0.9" fill="#34341e" opacity="0.7"/><circle cx="14.6" cy="5.1" r="0.7" fill="#34341e" opacity="0.7"/><circle cx="23.2" cy="11.8" r="1.4" fill="#34341e" opacity="0.7"/><circle cx="21.4" cy="20.1" r="0.7" fill="#34341e" opacity="0.7"/><circle cx="25.9" cy="7.5" r="1.1" fill="#34341e" opacity="0.7"/><circle cx="14.6" cy="24.4" r="1.7" fill="#34341e" opacity="0.7"/><circle cx="16.2" cy="16.0" r="1.4" fill="#34341e" opacity="0.7"/><circle cx="17.9" cy="15.5" r="1.2" fill="#34341e" opacity="0.7"/><circle cx="27.3" cy="15.1" r="1.4" fill="#34341e" opacity="0.7"/><circle cx="17.6" cy="13.6" r="1.7" fill="#34341e" opacity="0.7"/><circle cx="17.3" cy="21.9" r="0.9" fill="#34341e" opacity="0.7"/><circle cx="23.4" cy="19.4" r="1.1" fill="#34341e" opacity="0.7"/><circle cx="10.8" cy="20.3" r="1.6" fill="#9c9a6c" opacity="0.7"/><circle cx="4.8" cy="11.9" r="0.9" fill="#34341e" opacity="0.7"/><circle cx="22.1" cy="24.9" r="1.7" fill="#34341e" opacity="0.7"/><circle cx="14.1" cy="23.1" r="1.5" fill="#34341e" opacity="0.7"/><circle cx="18.2" cy="9.0" r="1.1" fill="#34341e" opacity="0.7"/><circle cx="16.1" cy="8.3" r="0.7" fill="#9c9a6c" opacity="0.7"/><circle cx="26.5" cy="24.2" r="1.5" fill="#34341e" opacity="0.7"/><circle cx="27.3" cy="4.8" r="1.8" fill="#34341e" opacity="0.7"/><circle cx="27.1" cy="20.4" r="0.7" fill="#9c9a6c" opacity="0.7"/><circle cx="22.1" cy="23.9" r="0.7" fill="#34341e" opacity="0.7"/><circle cx="12.6" cy="12.1" r="1.4" fill="#34341e" opacity="0.7"/><circle cx="14.5" cy="24.4" r="1.3" fill="#9c9a6c" opacity="0.7"/><circle cx="5.3" cy="24.6" r="1.0" fill="#34341e" opacity="0.7"/><circle cx="20.2" cy="8.3" r="1.7" fill="#34341e" opacity="0.7"/><circle cx="3.4" cy="14.5" r="1.3" fill="#34341e" opacity="0.7"/><circle cx="25.0" cy="21.5" r="1.3" fill="#34341e" opacity="0.7"/><circle cx="7.8" cy="13.7" r="1.2" fill="#9c9a6c" opacity="0.7"/><circle cx="27.1" cy="22.7" r="1.2" fill="#34341e" opacity="0.7"/><circle cx="12.9" cy="9.3" r="0.8" fill="#34341e" opacity="0.7"/><circle cx="3.5" cy="11.9" r="1.8" fill="#34341e" opacity="0.7"/><circle cx="25.0" cy="21.9" r="0.6" fill="#34341e" opacity="0.7"/><circle cx="1.3" cy="21.4" r="1.6" fill="#34341e" opacity="0.7"/><circle cx="22.0" cy="5.7" r="1.7" fill="#34341e" opacity="0.7"/><circle cx="20.1" cy="22.4" r="0.7" fill="#34341e" opacity="0.7"/><circle cx="27.0" cy="15.0" r="0.8" fill="#34341e" opacity="0.7"/><circle cx="27.1" cy="4.8" r="1.3" fill="#34341e" opacity="0.7"/><circle cx="13.7" cy="9.7" r="0.8" fill="#34341e" opacity="0.7"/><circle cx="17.6" cy="16.6" r="1.5" fill="#34341e" opacity="0.7"/><circle cx="11.9" cy="16.1" r="1.1" fill="#34341e" opacity="0.7"/><circle cx="15.0" cy="22.9" r="1.4" fill="#34341e" opacity="0.7"/><circle cx="5.8" cy="6.5" r="1.8" fill="#34341e" opacity="0.7"/><circle cx="17.0" cy="17.3" r="0.8" fill="#9c9a6c" opacity="0.7"/><circle cx="5.4" cy="16.3" r="1.6" fill="#9c9a6c" opacity="0.7"/><circle cx="1.9" cy="4.7" r="1.1" fill="#9c9a6c" opacity="0.7"/><circle cx="15.6" cy="9.2" r="1.0" fill="#34341e" opacity="0.7"/><circle cx="5.0" cy="12.8" r="0.6" fill="#34341e" opacity="0.7"/><circle cx="9.9" cy="10.0" r="1.2" fill="#9c9a6c" opacity="0.7"/><circle cx="10.3" cy="24.0" r="1.5" fill="#34341e" opacity="0.7"/><circle cx="11.7" cy="23.8" r="1.1" fill="#34341e" opacity="0.7"/><circle cx="7.5" cy="19.3" r="1.5" fill="#34341e" opacity="0.7"/><circle cx="3.1" cy="15.5" r="0.6" fill="#34341e" opacity="0.7"/></g></svg>
<div class="t" style="left:440.3px;top:688.05px;font-size:14px;color:#101828;font-weight:400;letter-spacing:0px;font-family:"Liberation Sans", sans-serif;">Low Rider</div>
<div class="t" style="left:632.5px;top:685.15px;font-size:14px;color:#1f1f1f;font-weight:400;letter-spacing:0px;font-family:"Liberation Sans", sans-serif;">Wrong Product</div>
<div class="t" style="left:848.6px;top:685.15px;font-size:14px;color:#1f1f1f;font-weight:400;letter-spacing:0.65px;font-family:"Liberation Sans", sans-serif;">2011/04/25</div>
<div class="t" style="left:1039.0px;top:685.15px;font-size:14px;color:#1f1f1f;font-weight:400;letter-spacing:0.65px;font-family:"Liberation Sans", sans-serif;">2011/04/25</div>
<div class="t" style="left:1251.0px;top:685.15px;font-size:14px;color:#1f1f1f;font-weight:400;letter-spacing:0.65px;font-family:"Liberation Sans", sans-serif;">2011/11/03</div>
<svg class="ic" width="16" height="18" viewBox="0 0 16 18" style="left:1419px;top:681px"><path d="M5.3 2.6 L5.3 2 Q5.3 0.8 6.8 0.8 L9.2 0.8 Q10.7 0.8 10.7 2 L10.7 2.6 M0.5 3 L15.5 3 M2.2 3.5 L2.2 16.2 Q2.2 17.2 3.2 17.2 L12.8 17.2 Q13.8 17.2 13.8 16.2 L13.8 3.5 M6.2 6.5 L6.2 13.5 M9.8 6.5 L9.8 13.5" fill="none" stroke="#3b3d33" stroke-width="1.6"/></svg>
<div class="abs" style="left:309px;top:719px;width:1219px;height:1px;background:#e3e3e3"></div>
<div class="abs" style="left:309px;top:720px;width:1219px;height:46px;background:#f2f2f2"></div>
<div class="t" style="left:317.7px;top:732.15px;font-size:14px;color:#1f1f1f;font-weight:400;letter-spacing:0.1px;font-family:"Liberation Sans", sans-serif;">105</div>
<svg class="ic" width="30" height="30" viewBox="0 0 30 30" style="left:402px;top:728px"><circle cx="15" cy="15" r="15" fill="#fff" opacity="0.9"/><defs><clipPath id="cbflat728"><path d="M1 18.5 C1.5 14.5 5 12 10 11.5 C13 9 18 7 23 8 C27 9 29.5 12 29 15.5 C28.5 19 25 20.5 21 21 C16 22.5 11 23 6 22 C3 21.5 1 20.5 1 18.5Z"/></clipPath></defs><path d="M1 18.5 C1.5 14.5 5 12 10 11.5 C13 9 18 7 23 8 C27 9 29.5 12 29 15.5 C28.5 19 25 20.5 21 21 C16 22.5 11 23 6 22 C3 21.5 1 20.5 1 18.5Z" fill="#737a5e"/><g clip-path="url(#cbflat728)"><circle cx="11.4" cy="11.5" r="1.3" fill="#a3a88c" opacity="0.7"/><circle cx="25.9" cy="14.6" r="1.7" fill="#4a5038" opacity="0.7"/><circle cx="13.1" cy="16.4" r="1.2" fill="#a3a88c" opacity="0.7"/><circle cx="7.4" cy="8.4" r="1.1" fill="#4a5038" opacity="0.7"/><circle cx="25.2" cy="18.9" r="1.5" fill="#4a5038" opacity="0.7"/><circle cx="7.2" cy="13.6" r="0.8" fill="#4a5038" opacity="0.7"/><circle cx="25.6" cy="18.8" r="1.4" fill="#4a5038" opacity="0.7"/><circle cx="21.6" cy="17.1" r="1.3" fill="#4a5038" opacity="0.7"/><circle cx="11.0" cy="10.8" r="1.2" fill="#a3a88c" opacity="0.7"/><circle cx="5.5" cy="19.9" r="1.0" fill="#4a5038" opacity="0.7"/><circle cx="29.5" cy="8.5" r="1.3" fill="#4a5038" opacity="0.7"/><circle cx="4.1" cy="21.7" r="0.9" fill="#4a5038" opacity="0.7"/><circle cx="29.9" cy="8.4" r="1.0" fill="#4a5038" opacity="0.7"/><circle cx="14.9" cy="14.2" r="0.6" fill="#a3a88c" opacity="0.7"/><circle cx="6.4" cy="18.0" r="0.9" fill="#a3a88c" opacity="0.7"/><circle cx="27.6" cy="16.9" r="0.8" fill="#a3a88c" opacity="0.7"/><circle cx="23.4" cy="17.4" r="1.2" fill="#a3a88c" opacity="0.7"/><circle cx="15.2" cy="10.9" r="1.3" fill="#4a5038" opacity="0.7"/><circle cx="10.7" cy="16.1" r="1.0" fill="#a3a88c" opacity="0.7"/><circle cx="2.5" cy="9.2" r="0.9" fill="#4a5038" opacity="0.7"/><circle cx="14.3" cy="18.6" r="0.8" fill="#4a5038" opacity="0.7"/><circle cx="12.6" cy="17.4" r="1.1" fill="#a3a88c" opacity="0.7"/><circle cx="5.5" cy="14.7" r="0.6" fill="#a3a88c" opacity="0.7"/><circle cx="11.8" cy="20.1" r="1.3" fill="#4a5038" opacity="0.7"/><circle cx="9.6" cy="12.1" r="1.1" fill="#a3a88c" opacity="0.7"/><circle cx="8.5" cy="21.1" r="0.7" fill="#4a5038" opacity="0.7"/><circle cx="11.6" cy="9.4" r="1.8" fill="#4a5038" opacity="0.7"/><circle cx="19.5" cy="22.2" r="0.9" fill="#4a5038" opacity="0.7"/><circle cx="26.3" cy="12.6" r="0.8" fill="#a3a88c" opacity="0.7"/><circle cx="21.3" cy="16.8" r="0.6" fill="#4a5038" opacity="0.7"/><circle cx="21.6" cy="22.9" r="1.3" fill="#4a5038" opacity="0.7"/><circle cx="24.7" cy="20.8" r="1.0" fill="#4a5038" opacity="0.7"/><circle cx="7.7" cy="19.9" r="1.7" fill="#4a5038" opacity="0.7"/><circle cx="5.1" cy="20.8" r="0.8" fill="#4a5038" opacity="0.7"/><circle cx="29.5" cy="15.3" r="0.9" fill="#a3a88c" opacity="0.7"/><circle cx="18.8" cy="7.8" r="1.8" fill="#4a5038" opacity="0.7"/><circle cx="11.3" cy="12.8" r="1.4" fill="#a3a88c" opacity="0.7"/><circle cx="13.9" cy="22.8" r="1.2" fill="#4a5038" opacity="0.7"/><circle cx="1.4" cy="17.3" r="1.6" fill="#4a5038" opacity="0.7"/><circle cx="20.3" cy="16.6" r="1.3" fill="#4a5038" opacity="0.7"/><circle cx="9.2" cy="18.4" r="1.3" fill="#a3a88c" opacity="0.7"/><circle cx="10.5" cy="15.2" r="0.7" fill="#4a5038" opacity="0.7"/><circle cx="15.2" cy="13.2" r="1.7" fill="#a3a88c" opacity="0.7"/><circle cx="5.3" cy="18.8" r="1.6" fill="#a3a88c" opacity="0.7"/><circle cx="29.4" cy="10.6" r="0.8" fill="#4a5038" opacity="0.7"/><circle cx="14.3" cy="14.1" r="1.0" fill="#4a5038" opacity="0.7"/><circle cx="25.0" cy="20.5" r="1.4" fill="#4a5038" opacity="0.7"/><circle cx="8.7" cy="17.3" r="1.4" fill="#a3a88c" opacity="0.7"/><circle cx="7.7" cy="8.6" r="1.1" fill="#a3a88c" opacity="0.7"/><circle cx="19.5" cy="18.2" r="1.7" fill="#4a5038" opacity="0.7"/><circle cx="1.0" cy="11.5" r="1.4" fill="#a3a88c" opacity="0.7"/><circle cx="27.5" cy="11.8" r="1.1" fill="#4a5038" opacity="0.7"/><circle cx="17.7" cy="20.1" r="1.6" fill="#a3a88c" opacity="0.7"/><circle cx="27.5" cy="17.9" r="0.7" fill="#a3a88c" opacity="0.7"/><circle cx="2.0" cy="18.8" r="0.7" fill="#4a5038" opacity="0.7"/><circle cx="28.5" cy="19.9" r="1.1" fill="#4a5038" opacity="0.7"/><circle cx="25.0" cy="9.8" r="0.9" fill="#4a5038" opacity="0.7"/><circle cx="14.4" cy="16.5" r="0.7" fill="#a3a88c" opacity="0.7"/><circle cx="16.5" cy="8.7" r="1.0" fill="#4a5038" opacity="0.7"/><circle cx="8.8" cy="19.1" r="1.0" fill="#4a5038" opacity="0.7"/><circle cx="5.0" cy="20.6" r="1.5" fill="#4a5038" opacity="0.7"/><circle cx="25.7" cy="8.5" r="0.7" fill="#4a5038" opacity="0.7"/><circle cx="29.8" cy="14.7" r="0.9" fill="#a3a88c" opacity="0.7"/><circle cx="2.5" cy="9.2" r="1.5" fill="#a3a88c" opacity="0.7"/><circle cx="19.9" cy="21.7" r="0.6" fill="#4a5038" opacity="0.7"/><circle cx="15.9" cy="14.8" r="1.6" fill="#a3a88c" opacity="0.7"/><circle cx="3.8" cy="22.2" r="1.3" fill="#4a5038" opacity="0.7"/><circle cx="20.0" cy="22.5" r="0.7" fill="#a3a88c" opacity="0.7"/><circle cx="15.4" cy="17.8" r="1.4" fill="#4a5038" opacity="0.7"/><circle cx="7.6" cy="17.5" r="0.9" fill="#a3a88c" opacity="0.7"/></g></svg>
<div class="t" style="left:440.3px;top:735.05px;font-size:14px;color:#101828;font-weight:400;letter-spacing:0px;font-family:"Liberation Sans", sans-serif;">Super Skunk</div>
<div class="t" style="left:632.5px;top:732.15px;font-size:14px;color:#1f1f1f;font-weight:400;letter-spacing:0px;font-family:"Liberation Sans", sans-serif;">Defective Product</div>
<div class="t" style="left:848.6px;top:732.15px;font-size:14px;color:#1f1f1f;font-weight:400;letter-spacing:0.65px;font-family:"Liberation Sans", sans-serif;">2011/04/25</div>
<div class="t" style="left:1039.0px;top:732.15px;font-size:14px;color:#1f1f1f;font-weight:400;letter-spacing:0.65px;font-family:"Liberation Sans", sans-serif;">2011/04/25</div>
<div class="t" style="left:1251.0px;top:732.15px;font-size:14px;color:#1f1f1f;font-weight:400;letter-spacing:0.65px;font-family:"Liberation Sans", sans-serif;">2012/07/25</div>
<svg class="ic" width="16" height="18" viewBox="0 0 16 18" style="left:1419px;top:728px"><path d="M5.3 2.6 L5.3 2 Q5.3 0.8 6.8 0.8 L9.2 0.8 Q10.7 0.8 10.7 2 L10.7 2.6 M0.5 3 L15.5 3 M2.2 3.5 L2.2 16.2 Q2.2 17.2 3.2 17.2 L12.8 17.2 Q13.8 17.2 13.8 16.2 L13.8 3.5 M6.2 6.5 L6.2 13.5 M9.8 6.5 L9.8 13.5" fill="none" stroke="#3b3d33" stroke-width="1.6"/></svg>
<div class="abs" style="left:309px;top:766px;width:1219px;height:1px;background:#e3e3e3"></div>
<div class="abs" style="left:309px;top:767px;width:1219px;height:46px;background:#ffffff"></div>
<div class="t" style="left:317.7px;top:779.15px;font-size:14px;color:#1f1f1f;font-weight:400;letter-spacing:0.1px;font-family:"Liberation Sans", sans-serif;">106</div>
<svg class="ic" width="30" height="30" viewBox="0 0 30 30" style="left:402px;top:775px"><circle cx="15" cy="15" r="15" fill="#fff" opacity="0.9"/><defs><clipPath id="cblight775"><path d="M1 17 C1.5 12.5 5 10 9 10.5 C11 7.5 16 7 19 9.5 C21 8.5 24 10 24.5 13 C27 14.5 29.5 17.5 29 21 C28 24 25 24 22.5 22.5 C18 23.5 14 22.5 11 21.5 C7 22 2.5 21 1 17Z"/></clipPath></defs><path d="M1 17 C1.5 12.5 5 10 9 10.5 C11 7.5 16 7 19 9.5 C21 8.5 24 10 24.5 13 C27 14.5 29.5 17.5 29 21 C28 24 25 24 22.5 22.5 C18 23.5 14 22.5 11 21.5 C7 22 2.5 21 1 17Z" fill="#a9a47c"/><g clip-path="url(#cblight775)"><circle cx="14.6" cy="11.6" r="1.5" fill="#77714f" opacity="0.7"/><circle cx="15.4" cy="20.8" r="0.7" fill="#77714f" opacity="0.7"/><circle cx="17.3" cy="15.4" r="1.2" fill="#77714f" opacity="0.7"/><circle cx="24.8" cy="11.5" r="1.6" fill="#77714f" opacity="0.7"/><circle cx="7.6" cy="21.2" r="0.9" fill="#d2cca6" opacity="0.7"/><circle cx="13.4" cy="19.2" r="1.7" fill="#77714f" opacity="0.7"/><circle cx="3.6" cy="12.3" r="1.1" fill="#d2cca6" opacity="0.7"/><circle cx="12.9" cy="23.7" r="1.7" fill="#77714f" opacity="0.7"/><circle cx="5.7" cy="18.7" r="1.4" fill="#77714f" opacity="0.7"/><circle cx="26.3" cy="16.0" r="1.6" fill="#d2cca6" opacity="0.7"/><circle cx="25.6" cy="12.2" r="1.2" fill="#77714f" opacity="0.7"/><circle cx="1.3" cy="22.0" r="0.7" fill="#d2cca6" opacity="0.7"/><circle cx="28.6" cy="12.5" r="1.1" fill="#d2cca6" opacity="0.7"/><circle cx="19.1" cy="11.6" r="1.0" fill="#77714f" opacity="0.7"/><circle cx="28.2" cy="23.5" r="1.7" fill="#d2cca6" opacity="0.7"/><circle cx="16.9" cy="14.1" r="1.4" fill="#d2cca6" opacity="0.7"/><circle cx="16.7" cy="13.6" r="0.9" fill="#d2cca6" opacity="0.7"/><circle cx="28.3" cy="12.5" r="1.6" fill="#d2cca6" opacity="0.7"/><circle cx="9.8" cy="9.8" r="1.8" fill="#d2cca6" opacity="0.7"/><circle cx="17.5" cy="12.0" r="1.2" fill="#d2cca6" opacity="0.7"/><circle cx="21.5" cy="15.9" r="1.1" fill="#77714f" opacity="0.7"/><circle cx="14.4" cy="18.6" r="1.2" fill="#77714f" opacity="0.7"/><circle cx="21.1" cy="15.7" r="0.6" fill="#77714f" opacity="0.7"/><circle cx="4.7" cy="18.9" r="0.8" fill="#77714f" opacity="0.7"/><circle cx="9.0" cy="24.0" r="1.1" fill="#d2cca6" opacity="0.7"/><circle cx="28.1" cy="15.5" r="1.6" fill="#d2cca6" opacity="0.7"/><circle cx="3.5" cy="22.6" r="1.3" fill="#77714f" opacity="0.7"/><circle cx="3.8" cy="12.0" r="0.6" fill="#d2cca6" opacity="0.7"/><circle cx="23.1" cy="10.1" r="1.1" fill="#d2cca6" opacity="0.7"/><circle cx="17.2" cy="19.2" r="1.6" fill="#77714f" opacity="0.7"/><circle cx="17.7" cy="15.7" r="1.4" fill="#d2cca6" opacity="0.7"/><circle cx="1.7" cy="13.4" r="0.6" fill="#d2cca6" opacity="0.7"/><circle cx="14.8" cy="9.4" r="1.5" fill="#d2cca6" opacity="0.7"/><circle cx="18.9" cy="18.7" r="0.7" fill="#77714f" opacity="0.7"/><circle cx="26.7" cy="13.3" r="0.6" fill="#77714f" opacity="0.7"/><circle cx="16.1" cy="8.7" r="0.8" fill="#77714f" opacity="0.7"/><circle cx="24.8" cy="11.0" r="0.8" fill="#77714f" opacity="0.7"/><circle cx="16.3" cy="15.7" r="0.7" fill="#d2cca6" opacity="0.7"/><circle cx="11.6" cy="18.6" r="1.7" fill="#77714f" opacity="0.7"/><circle cx="28.6" cy="19.4" r="1.6" fill="#77714f" opacity="0.7"/><circle cx="29.2" cy="22.7" r="0.8" fill="#77714f" opacity="0.7"/><circle cx="13.4" cy="13.7" r="1.3" fill="#77714f" opacity="0.7"/><circle cx="15.0" cy="8.1" r="0.7" fill="#77714f" opacity="0.7"/><circle cx="20.1" cy="15.3" r="1.6" fill="#d2cca6" opacity="0.7"/><circle cx="25.5" cy="15.1" r="1.4" fill="#77714f" opacity="0.7"/><circle cx="27.7" cy="8.6" r="0.9" fill="#d2cca6" opacity="0.7"/><circle cx="13.3" cy="13.3" r="1.3" fill="#77714f" opacity="0.7"/><circle cx="13.0" cy="18.0" r="1.2" fill="#d2cca6" opacity="0.7"/><circle cx="11.8" cy="20.6" r="1.6" fill="#d2cca6" opacity="0.7"/><circle cx="7.2" cy="17.5" r="1.4" fill="#d2cca6" opacity="0.7"/><circle cx="14.4" cy="10.7" r="1.6" fill="#77714f" opacity="0.7"/><circle cx="3.6" cy="18.5" r="1.5" fill="#77714f" opacity="0.7"/><circle cx="11.5" cy="18.4" r="1.0" fill="#77714f" opacity="0.7"/><circle cx="27.6" cy="21.3" r="1.4" fill="#77714f" opacity="0.7"/><circle cx="20.0" cy="22.7" r="1.0" fill="#77714f" opacity="0.7"/><circle cx="16.7" cy="8.2" r="0.9" fill="#77714f" opacity="0.7"/><circle cx="29.0" cy="8.0" r="1.5" fill="#d2cca6" opacity="0.7"/><circle cx="17.2" cy="7.3" r="1.6" fill="#77714f" opacity="0.7"/><circle cx="21.9" cy="19.2" r="1.7" fill="#77714f" opacity="0.7"/><circle cx="27.6" cy="10.9" r="0.7" fill="#d2cca6" opacity="0.7"/><circle cx="21.0" cy="23.1" r="0.7" fill="#77714f" opacity="0.7"/><circle cx="9.0" cy="23.6" r="1.1" fill="#77714f" opacity="0.7"/><circle cx="11.1" cy="18.4" r="1.3" fill="#d2cca6" opacity="0.7"/><circle cx="4.7" cy="23.3" r="0.7" fill="#77714f" opacity="0.7"/><circle cx="26.6" cy="10.4" r="0.7" fill="#77714f" opacity="0.7"/><circle cx="19.3" cy="23.0" r="1.0" fill="#d2cca6" opacity="0.7"/><circle cx="9.5" cy="8.7" r="1.1" fill="#77714f" opacity="0.7"/><circle cx="21.1" cy="7.5" r="0.9" fill="#77714f" opacity="0.7"/><circle cx="10.5" cy="11.1" r="1.6" fill="#77714f" opacity="0.7"/><circle cx="12.4" cy="21.9" r="1.5" fill="#77714f" opacity="0.7"/></g></svg>
<div class="t" style="left:440.3px;top:782.05px;font-size:14px;color:#101828;font-weight:400;letter-spacing:0px;font-family:"Liberation Sans", sans-serif;">Low Rider</div>
<div class="t" style="left:632.5px;top:779.15px;font-size:14px;color:#1f1f1f;font-weight:400;letter-spacing:0px;font-family:"Liberation Sans", sans-serif;">Wrong Product</div>
<div class="t" style="left:848.6px;top:779.15px;font-size:14px;color:#1f1f1f;font-weight:400;letter-spacing:0.65px;font-family:"Liberation Sans", sans-serif;">2011/04/25</div>
<div class="t" style="left:1039.0px;top:779.15px;font-size:14px;color:#1f1f1f;font-weight:400;letter-spacing:0.65px;font-family:"Liberation Sans", sans-serif;">2011/04/25</div>
<div class="t" style="left:1251.0px;top:779.15px;font-size:14px;color:#1f1f1f;font-weight:400;letter-spacing:0.65px;font-family:"Liberation Sans", sans-serif;">2014/02/25</div>
<svg class="ic" width="16" height="18" viewBox="0 0 16 18" style="left:1419px;top:775px"><path d="M5.3 2.6 L5.3 2 Q5.3 0.8 6.8 0.8 L9.2 0.8 Q10.7 0.8 10.7 2 L10.7 2.6 M0.5 3 L15.5 3 M2.2 3.5 L2.2 16.2 Q2.2 17.2 3.2 17.2 L12.8 17.2 Q13.8 17.2 13.8 16.2 L13.8 3.5 M6.2 6.5 L6.2 13.5 M9.8 6.5 L9.8 13.5" fill="none" stroke="#3b3d33" stroke-width="1.6"/></svg>
<div class="abs" style="left:309px;top:813px;width:1219px;height:1px;background:#e3e3e3"></div>
<div class="abs" style="left:309px;top:814px;width:1219px;height:46px;background:#f2f2f2"></div>
<div class="t" style="left:317.7px;top:826.15px;font-size:14px;color:#1f1f1f;font-weight:400;letter-spacing:0.1px;font-family:"Liberation Sans", sans-serif;">107</div>
<svg class="ic" width="30" height="30" viewBox="0 0 30 30" style="left:402px;top:822px"><circle cx="15" cy="15" r="15" fill="#fff" opacity="0.9"/><defs><clipPath id="cbdark822"><path d="M1 20.5 C1.5 15 4 11 8 8.5 C11 5.5 15 4.5 19 6 C23 7.5 25.5 11 27 15 C28 17 29 19 28.5 21 C26 23.5 22 24.5 16 24 C10 24.5 5 24 1 20.5Z"/></clipPath></defs><path d="M1 20.5 C1.5 15 4 11 8 8.5 C11 5.5 15 4.5 19 6 C23 7.5 25.5 11 27 15 C28 17 29 19 28.5 21 C26 23.5 22 24.5 16 24 C10 24.5 5 24 1 20.5Z" fill="#5f5f38"/><g clip-path="url(#cbdark822)"><circle cx="14.3" cy="10.3" r="1.2" fill="#34341e" opacity="0.7"/><circle cx="6.6" cy="23.2" r="1.0" fill="#34341e" opacity="0.7"/><circle cx="23.7" cy="4.7" r="1.8" fill="#9c9a6c" opacity="0.7"/><circle cx="22.7" cy="8.9" r="1.5" fill="#34341e" opacity="0.7"/><circle cx="11.6" cy="23.7" r="0.9" fill="#9c9a6c" opacity="0.7"/><circle cx="8.4" cy="22.3" r="1.6" fill="#34341e" opacity="0.7"/><circle cx="8.7" cy="17.2" r="1.0" fill="#34341e" opacity="0.7"/><circle cx="19.0" cy="22.5" r="0.8" fill="#34341e" opacity="0.7"/><circle cx="4.0" cy="21.3" r="1.2" fill="#34341e" opacity="0.7"/><circle cx="2.2" cy="12.4" r="1.2" fill="#9c9a6c" opacity="0.7"/><circle cx="27.3" cy="5.8" r="0.8" fill="#34341e" opacity="0.7"/><circle cx="20.4" cy="15.5" r="0.7" fill="#34341e" opacity="0.7"/><circle cx="25.6" cy="4.1" r="0.7" fill="#9c9a6c" opacity="0.7"/><circle cx="21.1" cy="9.0" r="1.5" fill="#9c9a6c" opacity="0.7"/><circle cx="6.4" cy="18.2" r="1.4" fill="#34341e" opacity="0.7"/><circle cx="2.0" cy="21.9" r="1.1" fill="#34341e" opacity="0.7"/><circle cx="10.8" cy="10.1" r="1.6" fill="#9c9a6c" opacity="0.7"/><circle cx="6.8" cy="17.0" r="0.8" fill="#9c9a6c" opacity="0.7"/><circle cx="4.9" cy="19.4" r="1.3" fill="#9c9a6c" opacity="0.7"/><circle cx="2.9" cy="5.6" r="0.9" fill="#9c9a6c" opacity="0.7"/><circle cx="4.8" cy="16.2" r="1.6" fill="#9c9a6c" opacity="0.7"/><circle cx="28.9" cy="18.2" r="1.2" fill="#34341e" opacity="0.7"/><circle cx="18.9" cy="9.8" r="1.0" fill="#34341e" opacity="0.7"/><circle cx="7.3" cy="8.1" r="1.0" fill="#34341e" opacity="0.7"/><circle cx="8.7" cy="9.1" r="1.2" fill="#9c9a6c" opacity="0.7"/><circle cx="18.5" cy="20.7" r="0.9" fill="#34341e" opacity="0.7"/><circle cx="10.8" cy="6.3" r="1.0" fill="#9c9a6c" opacity="0.7"/><circle cx="14.6" cy="5.9" r="1.6" fill="#9c9a6c" opacity="0.7"/><circle cx="3.5" cy="4.5" r="1.7" fill="#34341e" opacity="0.7"/><circle cx="27.3" cy="19.9" r="1.1" fill="#34341e" opacity="0.7"/><circle cx="18.2" cy="6.5" r="1.8" fill="#34341e" opacity="0.7"/><circle cx="7.4" cy="19.2" r="1.5" fill="#34341e" opacity="0.7"/><circle cx="14.3" cy="15.9" r="1.0" fill="#34341e" opacity="0.7"/><circle cx="2.3" cy="23.6" r="0.7" fill="#34341e" opacity="0.7"/><circle cx="10.1" cy="24.6" r="0.6" fill="#34341e" opacity="0.7"/><circle cx="2.5" cy="23.2" r="1.2" fill="#34341e" opacity="0.7"/><circle cx="7.8" cy="23.0" r="1.8" fill="#34341e" opacity="0.7"/><circle cx="2.1" cy="18.9" r="1.1" fill="#34341e" opacity="0.7"/><circle cx="17.4" cy="20.6" r="1.6" fill="#34341e" opacity="0.7"/><circle cx="2.7" cy="13.3" r="1.3" fill="#9c9a6c" opacity="0.7"/><circle cx="12.5" cy="19.7" r="1.7" fill="#34341e" opacity="0.7"/><circle cx="12.9" cy="4.3" r="0.6" fill="#34341e" opacity="0.7"/><circle cx="4.7" cy="10.5" r="1.0" fill="#34341e" opacity="0.7"/><circle cx="2.4" cy="22.9" r="1.1" fill="#34341e" opacity="0.7"/><circle cx="19.3" cy="9.1" r="0.8" fill="#9c9a6c" opacity="0.7"/><circle cx="2.0" cy="14.5" r="1.2" fill="#9c9a6c" opacity="0.7"/><circle cx="13.7" cy="6.3" r="1.3" fill="#34341e" opacity="0.7"/><circle cx="10.4" cy="4.5" r="1.2" fill="#34341e" opacity="0.7"/><circle cx="26.5" cy="9.8" r="0.7" fill="#34341e" opacity="0.7"/><circle cx="6.0" cy="9.0" r="1.1" fill="#9c9a6c" opacity="0.7"/><circle cx="5.9" cy="13.0" r="1.3" fill="#34341e" opacity="0.7"/><circle cx="24.5" cy="10.6" r="0.9" fill="#34341e" opacity="0.7"/><circle cx="1.7" cy="11.1" r="1.4" fill="#34341e" opacity="0.7"/><circle cx="11.0" cy="18.5" r="1.7" fill="#34341e" opacity="0.7"/><circle cx="15.7" cy="8.5" r="0.9" fill="#34341e" opacity="0.7"/><circle cx="16.1" cy="18.4" r="1.0" fill="#34341e" opacity="0.7"/><circle cx="27.1" cy="7.9" r="1.8" fill="#34341e" opacity="0.7"/><circle cx="27.2" cy="20.4" r="1.2" fill="#34341e" opacity="0.7"/><circle cx="5.3" cy="14.9" r="1.0" fill="#34341e" opacity="0.7"/><circle cx="15.2" cy="7.2" r="1.1" fill="#34341e" opacity="0.7"/><circle cx="2.5" cy="12.0" r="1.7" fill="#34341e" opacity="0.7"/><circle cx="20.4" cy="11.1" r="1.3" fill="#34341e" opacity="0.7"/><circle cx="14.1" cy="9.4" r="1.3" fill="#34341e" opacity="0.7"/><circle cx="24.3" cy="16.7" r="1.6" fill="#34341e" opacity="0.7"/><circle cx="16.2" cy="17.8" r="1.1" fill="#34341e" opacity="0.7"/><circle cx="18.0" cy="17.3" r="0.7" fill="#9c9a6c" opacity="0.7"/><circle cx="24.5" cy="5.1" r="1.3" fill="#34341e" opacity="0.7"/><circle cx="4.1" cy="14.5" r="1.6" fill="#9c9a6c" opacity="0.7"/><circle cx="16.4" cy="24.8" r="0.9" fill="#34341e" opacity="0.7"/><circle cx="2.2" cy="5.4" r="1.6" fill="#34341e" opacity="0.7"/></g></svg>
<div class="t" style="left:440.3px;top:829.05px;font-size:14px;color:#101828;font-weight:400;letter-spacing:0px;font-family:"Liberation Sans", sans-serif;">Super Skunk</div>
<div class="t" style="left:632.5px;top:826.15px;font-size:14px;color:#1f1f1f;font-weight:400;letter-spacing:0px;font-family:"Liberation Sans", sans-serif;">Late Delivery</div>
<div class="t" style="left:848.6px;top:826.15px;font-size:14px;color:#1f1f1f;font-weight:400;letter-spacing:0.65px;font-family:"Liberation Sans", sans-serif;">2011/04/25</div>
<div class="t" style="left:1039.0px;top:826.15px;font-size:14px;color:#1f1f1f;font-weight:400;letter-spacing:0.65px;font-family:"Liberation Sans", sans-serif;">2011/04/25</div>
<div class="t" style="left:1251.0px;top:826.15px;font-size:14px;color:#1f1f1f;font-weight:400;letter-spacing:0.65px;font-family:"Liberation Sans", sans-serif;">2014/02/25</div>
<svg class="ic" width="16" height="18" viewBox="0 0 16 18" style="left:1419px;top:822px"><path d="M5.3 2.6 L5.3 2 Q5.3 0.8 6.8 0.8 L9.2 0.8 Q10.7 0.8 10.7 2 L10.7 2.6 M0.5 3 L15.5 3 M2.2 3.5 L2.2 16.2 Q2.2 17.2 3.2 17.2 L12.8 17.2 Q13.8 17.2 13.8 16.2 L13.8 3.5 M6.2 6.5 L6.2 13.5 M9.8 6.5 L9.8 13.5" fill="none" stroke="#3b3d33" stroke-width="1.6"/></svg>
<div class="abs" style="left:309px;top:860px;width:1219px;height:1px;background:#e3e3e3"></div>
<div class="abs" style="left:309px;top:861px;width:1219px;height:46px;background:#ffffff"></div>
<div class="t" style="left:317.7px;top:873.15px;font-size:14px;color:#1f1f1f;font-weight:400;letter-spacing:0.1px;font-family:"Liberation Sans", sans-serif;">108</div>
<svg class="ic" width="30" height="30" viewBox="0 0 30 30" style="left:402px;top:869px"><circle cx="15" cy="15" r="15" fill="#fff" opacity="0.9"/><defs><clipPath id="cbflat2869"><path d="M1 18.5 C1.5 14.5 5 12 10 11.5 C13 9 18 7 23 8 C27 9 29.5 12 29 15.5 C28.5 19 25 20.5 21 21 C16 22.5 11 23 6 22 C3 21.5 1 20.5 1 18.5Z"/></clipPath></defs><path d="M1 18.5 C1.5 14.5 5 12 10 11.5 C13 9 18 7 23 8 C27 9 29.5 12 29 15.5 C28.5 19 25 20.5 21 21 C16 22.5 11 23 6 22 C3 21.5 1 20.5 1 18.5Z" fill="#737a5e"/><g clip-path="url(#cbflat2869)"><circle cx="4.2" cy="16.6" r="1.1" fill="#4a5038" opacity="0.7"/><circle cx="6.7" cy="21.7" r="0.9" fill="#a3a88c" opacity="0.7"/><circle cx="3.9" cy="18.1" r="0.8" fill="#4a5038" opacity="0.7"/><circle cx="29.0" cy="17.6" r="0.9" fill="#a3a88c" opacity="0.7"/><circle cx="13.8" cy="14.9" r="0.7" fill="#4a5038" opacity="0.7"/><circle cx="20.7" cy="8.5" r="1.2" fill="#4a5038" opacity="0.7"/><circle cx="15.0" cy="13.4" r="1.0" fill="#4a5038" opacity="0.7"/><circle cx="24.4" cy="8.8" r="1.7" fill="#4a5038" opacity="0.7"/><circle cx="14.2" cy="13.7" r="0.7" fill="#4a5038" opacity="0.7"/><circle cx="7.4" cy="17.1" r="1.6" fill="#a3a88c" opacity="0.7"/><circle cx="23.5" cy="17.7" r="1.4" fill="#4a5038" opacity="0.7"/><circle cx="15.2" cy="16.8" r="1.1" fill="#a3a88c" opacity="0.7"/><circle cx="25.6" cy="14.8" r="0.9" fill="#4a5038" opacity="0.7"/><circle cx="24.4" cy="13.0" r="1.0" fill="#4a5038" opacity="0.7"/><circle cx="14.8" cy="12.7" r="1.2" fill="#a3a88c" opacity="0.7"/><circle cx="1.3" cy="12.2" r="1.4" fill="#a3a88c" opacity="0.7"/><circle cx="5.7" cy="8.3" r="0.9" fill="#4a5038" opacity="0.7"/><circle cx="18.6" cy="21.4" r="1.4" fill="#4a5038" opacity="0.7"/><circle cx="25.7" cy="20.9" r="0.9" fill="#4a5038" opacity="0.7"/><circle cx="23.3" cy="20.7" r="1.4" fill="#a3a88c" opacity="0.7"/><circle cx="13.9" cy="15.2" r="1.4" fill="#4a5038" opacity="0.7"/><circle cx="25.5" cy="15.7" r="1.0" fill="#a3a88c" opacity="0.7"/><circle cx="6.4" cy="13.1" r="0.8" fill="#4a5038" opacity="0.7"/><circle cx="9.9" cy="16.6" r="0.8" fill="#a3a88c" opacity="0.7"/><circle cx="10.4" cy="8.9" r="0.9" fill="#a3a88c" opacity="0.7"/><circle cx="3.7" cy="16.1" r="1.1" fill="#4a5038" opacity="0.7"/><circle cx="15.9" cy="15.6" r="0.9" fill="#a3a88c" opacity="0.7"/><circle cx="13.0" cy="8.8" r="1.4" fill="#a3a88c" opacity="0.7"/><circle cx="23.7" cy="16.8" r="1.6" fill="#a3a88c" opacity="0.7"/><circle cx="21.7" cy="14.6" r="0.7" fill="#4a5038" opacity="0.7"/><circle cx="22.0" cy="18.8" r="0.8" fill="#4a5038" opacity="0.7"/><circle cx="25.3" cy="9.1" r="1.1" fill="#4a5038" opacity="0.7"/><circle cx="6.7" cy="8.5" r="0.6" fill="#4a5038" opacity="0.7"/><circle cx="1.6" cy="21.2" r="1.7" fill="#4a5038" opacity="0.7"/><circle cx="21.8" cy="16.4" r="0.9" fill="#a3a88c" opacity="0.7"/><circle cx="13.9" cy="14.2" r="1.6" fill="#a3a88c" opacity="0.7"/><circle cx="24.9" cy="18.3" r="1.4" fill="#4a5038" opacity="0.7"/><circle cx="10.9" cy="15.2" r="1.3" fill="#4a5038" opacity="0.7"/><circle cx="23.1" cy="18.1" r="0.6" fill="#4a5038" opacity="0.7"/><circle cx="27.4" cy="7.6" r="1.6" fill="#a3a88c" opacity="0.7"/><circle cx="26.4" cy="20.8" r="1.2" fill="#4a5038" opacity="0.7"/><circle cx="26.2" cy="20.4" r="1.4" fill="#a3a88c" opacity="0.7"/><circle cx="18.1" cy="12.2" r="1.3" fill="#a3a88c" opacity="0.7"/><circle cx="17.3" cy="7.6" r="0.9" fill="#a3a88c" opacity="0.7"/><circle cx="2.1" cy="15.8" r="1.4" fill="#a3a88c" opacity="0.7"/><circle cx="14.9" cy="9.1" r="0.8" fill="#4a5038" opacity="0.7"/><circle cx="29.8" cy="7.7" r="1.4" fill="#4a5038" opacity="0.7"/><circle cx="10.8" cy="13.3" r="0.9" fill="#4a5038" opacity="0.7"/><circle cx="29.6" cy="7.1" r="1.4" fill="#a3a88c" opacity="0.7"/><circle cx="13.9" cy="22.9" r="1.3" fill="#4a5038" opacity="0.7"/><circle cx="22.3" cy="19.6" r="1.1" fill="#4a5038" opacity="0.7"/><circle cx="12.9" cy="21.0" r="1.5" fill="#4a5038" opacity="0.7"/><circle cx="26.7" cy="8.1" r="1.4" fill="#4a5038" opacity="0.7"/><circle cx="13.2" cy="21.2" r="1.1" fill="#4a5038" opacity="0.7"/><circle cx="6.6" cy="8.0" r="1.6" fill="#4a5038" opacity="0.7"/><circle cx="25.6" cy="13.3" r="0.7" fill="#a3a88c" opacity="0.7"/><circle cx="22.2" cy="21.9" r="1.7" fill="#4a5038" opacity="0.7"/><circle cx="29.7" cy="8.9" r="0.6" fill="#a3a88c" opacity="0.7"/><circle cx="20.4" cy="18.6" r="1.7" fill="#4a5038" opacity="0.7"/><circle cx="16.5" cy="22.8" r="1.2" fill="#4a5038" opacity="0.7"/><circle cx="25.7" cy="16.8" r="1.7" fill="#4a5038" opacity="0.7"/><circle cx="8.9" cy="19.8" r="0.8" fill="#4a5038" opacity="0.7"/><circle cx="22.8" cy="16.5" r="1.6" fill="#4a5038" opacity="0.7"/><circle cx="14.7" cy="15.6" r="1.7" fill="#4a5038" opacity="0.7"/><circle cx="9.7" cy="10.1" r="1.8" fill="#a3a88c" opacity="0.7"/><circle cx="18.3" cy="16.7" r="1.7" fill="#a3a88c" opacity="0.7"/><circle cx="14.9" cy="17.2" r="1.2" fill="#a3a88c" opacity="0.7"/><circle cx="9.1" cy="9.7" r="0.9" fill="#a3a88c" opacity="0.7"/><circle cx="26.9" cy="10.0" r="1.7" fill="#4a5038" opacity="0.7"/><circle cx="12.1" cy="17.0" r="0.8" fill="#a3a88c" opacity="0.7"/></g></svg>
<div class="t" style="left:437.0px;top:876.05px;font-size:14px;color:#101828;font-weight:400;letter-spacing:0px;font-family:"Liberation Sans", sans-serif;">White Widow</div>
<div class="t" style="left:632.5px;top:873.15px;font-size:14px;color:#1f1f1f;font-weight:400;letter-spacing:0px;font-family:"Liberation Sans", sans-serif;">Damaged Item</div>
<div class="t" style="left:848.6px;top:873.15px;font-size:14px;color:#1f1f1f;font-weight:400;letter-spacing:0.65px;font-family:"Liberation Sans", sans-serif;">2011/04/25</div>
<div class="t" style="left:1039.0px;top:873.15px;font-size:14px;color:#1f1f1f;font-weight:400;letter-spacing:0.65px;font-family:"Liberation Sans", sans-serif;">2011/04/25</div>
<div class="t" style="left:1251.0px;top:873.15px;font-size:14px;color:#1f1f1f;font-weight:400;letter-spacing:0.65px;font-family:"Liberation Sans", sans-serif;">2016/08/15</div>
<svg class="ic" width="16" height="18" viewBox="0 0 16 18" style="left:1419px;top:869px"><path d="M5.3 2.6 L5.3 2 Q5.3 0.8 6.8 0.8 L9.2 0.8 Q10.7 0.8 10.7 2 L10.7 2.6 M0.5 3 L15.5 3 M2.2 3.5 L2.2 16.2 Q2.2 17.2 3.2 17.2 L12.8 17.2 Q13.8 17.2 13.8 16.2 L13.8 3.5 M6.2 6.5 L6.2 13.5 M9.8 6.5 L9.8 13.5" fill="none" stroke="#3b3d33" stroke-width="1.6"/></svg>
<div class="abs" style="left:309px;top:907px;width:1219px;height:1px;background:#e3e3e3"></div>
<div class="abs" style="left:309px;top:908px;width:1219px;height:46px;background:#f2f2f2"></div>
<div class="t" style="left:317.7px;top:920.15px;font-size:14px;color:#1f1f1f;font-weight:400;letter-spacing:0.1px;font-family:"Liberation Sans", sans-serif;">109</div>
<svg class="ic" width="30" height="30" viewBox="0 0 30 30" style="left:402px;top:916px"><circle cx="15" cy="15" r="15" fill="#fff" opacity="0.9"/><defs><clipPath id="cblight916"><path d="M1 17 C1.5 12.5 5 10 9 10.5 C11 7.5 16 7 19 9.5 C21 8.5 24 10 24.5 13 C27 14.5 29.5 17.5 29 21 C28 24 25 24 22.5 22.5 C18 23.5 14 22.5 11 21.5 C7 22 2.5 21 1 17Z"/></clipPath></defs><path d="M1 17 C1.5 12.5 5 10 9 10.5 C11 7.5 16 7 19 9.5 C21 8.5 24 10 24.5 13 C27 14.5 29.5 17.5 29 21 C28 24 25 24 22.5 22.5 C18 23.5 14 22.5 11 21.5 C7 22 2.5 21 1 17Z" fill="#a9a47c"/><g clip-path="url(#cblight916)"><circle cx="12.5" cy="7.4" r="1.7" fill="#d2cca6" opacity="0.7"/><circle cx="27.2" cy="9.2" r="1.5" fill="#77714f" opacity="0.7"/><circle cx="15.4" cy="17.9" r="0.6" fill="#77714f" opacity="0.7"/><circle cx="15.2" cy="20.1" r="0.7" fill="#77714f" opacity="0.7"/><circle cx="26.1" cy="16.3" r="0.6" fill="#77714f" opacity="0.7"/><circle cx="3.9" cy="22.0" r="1.0" fill="#77714f" opacity="0.7"/><circle cx="9.4" cy="7.1" r="1.6" fill="#d2cca6" opacity="0.7"/><circle cx="22.2" cy="14.1" r="1.0" fill="#d2cca6" opacity="0.7"/><circle cx="14.6" cy="12.8" r="0.9" fill="#77714f" opacity="0.7"/><circle cx="21.8" cy="17.0" r="1.6" fill="#77714f" opacity="0.7"/><circle cx="19.4" cy="22.0" r="1.2" fill="#77714f" opacity="0.7"/><circle cx="2.4" cy="7.3" r="1.3" fill="#77714f" opacity="0.7"/><circle cx="26.0" cy="10.1" r="0.8" fill="#77714f" opacity="0.7"/><circle cx="7.8" cy="21.5" r="1.1" fill="#77714f" opacity="0.7"/><circle cx="19.9" cy="22.9" r="1.7" fill="#77714f" opacity="0.7"/><circle cx="16.3" cy="17.6" r="1.6" fill="#77714f" opacity="0.7"/><circle cx="18.1" cy="10.3" r="0.6" fill="#d2cca6" opacity="0.7"/><circle cx="13.4" cy="20.5" r="1.2" fill="#77714f" opacity="0.7"/><circle cx="18.0" cy="23.3" r="0.9" fill="#77714f" opacity="0.7"/><circle cx="5.1" cy="13.6" r="0.9" fill="#d2cca6" opacity="0.7"/><circle cx="11.2" cy="17.8" r="0.9" fill="#d2cca6" opacity="0.7"/><circle cx="29.7" cy="12.2" r="1.6" fill="#77714f" opacity="0.7"/><circle cx="7.4" cy="17.9" r="1.7" fill="#d2cca6" opacity="0.7"/><circle cx="8.6" cy="23.7" r="1.6" fill="#d2cca6" opacity="0.7"/><circle cx="25.1" cy="20.7" r="0.7" fill="#77714f" opacity="0.7"/><circle cx="19.3" cy="22.6" r="1.6" fill="#d2cca6" opacity="0.7"/><circle cx="9.3" cy="15.2" r="1.1" fill="#77714f" opacity="0.7"/><circle cx="14.9" cy="23.1" r="1.7" fill="#d2cca6" opacity="0.7"/><circle cx="18.2" cy="18.1" r="1.6" fill="#d2cca6" opacity="0.7"/><circle cx="1.8" cy="14.8" r="1.6" fill="#77714f" opacity="0.7"/><circle cx="25.2" cy="7.2" r="0.9" fill="#77714f" opacity="0.7"/><circle cx="6.9" cy="16.7" r="0.9" fill="#d2cca6" opacity="0.7"/><circle cx="11.0" cy="19.3" r="0.8" fill="#77714f" opacity="0.7"/><circle cx="22.4" cy="12.9" r="1.8" fill="#d2cca6" opacity="0.7"/><circle cx="10.2" cy="7.3" r="1.0" fill="#77714f" opacity="0.7"/><circle cx="6.8" cy="22.2" r="1.0" fill="#77714f" opacity="0.7"/><circle cx="17.3" cy="14.2" r="1.4" fill="#d2cca6" opacity="0.7"/><circle cx="22.9" cy="22.0" r="1.7" fill="#77714f" opacity="0.7"/><circle cx="2.6" cy="19.2" r="0.7" fill="#77714f" opacity="0.7"/><circle cx="1.3" cy="21.3" r="1.6" fill="#77714f" opacity="0.7"/><circle cx="19.6" cy="11.6" r="1.3" fill="#77714f" opacity="0.7"/><circle cx="23.2" cy="23.8" r="1.0" fill="#d2cca6" opacity="0.7"/><circle cx="13.4" cy="20.2" r="0.9" fill="#d2cca6" opacity="0.7"/><circle cx="5.1" cy="16.7" r="0.9" fill="#d2cca6" opacity="0.7"/><circle cx="16.5" cy="12.1" r="1.4" fill="#77714f" opacity="0.7"/><circle cx="21.1" cy="21.1" r="1.0" fill="#77714f" opacity="0.7"/><circle cx="8.6" cy="17.8" r="1.2" fill="#d2cca6" opacity="0.7"/><circle cx="2.5" cy="20.3" r="1.4" fill="#d2cca6" opacity="0.7"/><circle cx="29.9" cy="18.8" r="1.7" fill="#77714f" opacity="0.7"/><circle cx="25.6" cy="17.2" r="1.8" fill="#d2cca6" opacity="0.7"/><circle cx="1.4" cy="7.6" r="1.3" fill="#d2cca6" opacity="0.7"/><circle cx="18.5" cy="20.2" r="0.8" fill="#77714f" opacity="0.7"/><circle cx="23.7" cy="13.3" r="1.2" fill="#d2cca6" opacity="0.7"/><circle cx="27.0" cy="7.6" r="1.2" fill="#77714f" opacity="0.7"/><circle cx="9.1" cy="19.7" r="1.3" fill="#77714f" opacity="0.7"/><circle cx="5.1" cy="11.8" r="0.7" fill="#d2cca6" opacity="0.7"/><circle cx="26.0" cy="9.5" r="1.8" fill="#d2cca6" opacity="0.7"/><circle cx="5.6" cy="10.3" r="0.8" fill="#d2cca6" opacity="0.7"/><circle cx="3.0" cy="14.2" r="1.7" fill="#d2cca6" opacity="0.7"/><circle cx="18.4" cy="20.4" r="1.8" fill="#d2cca6" opacity="0.7"/><circle cx="10.8" cy="11.4" r="1.2" fill="#77714f" opacity="0.7"/><circle cx="18.0" cy="11.9" r="1.3" fill="#77714f" opacity="0.7"/><circle cx="25.3" cy="7.2" r="1.5" fill="#77714f" opacity="0.7"/><circle cx="13.2" cy="12.4" r="1.5" fill="#d2cca6" opacity="0.7"/><circle cx="10.2" cy="19.9" r="1.3" fill="#77714f" opacity="0.7"/><circle cx="28.8" cy="7.4" r="1.2" fill="#77714f" opacity="0.7"/><circle cx="29.7" cy="16.2" r="1.2" fill="#d2cca6" opacity="0.7"/><circle cx="13.4" cy="11.1" r="0.9" fill="#77714f" opacity="0.7"/><circle cx="13.1" cy="10.6" r="1.4" fill="#77714f" opacity="0.7"/><circle cx="26.6" cy="14.7" r="1.2" fill="#d2cca6" opacity="0.7"/></g></svg>
<div class="t" style="left:440.3px;top:923.05px;font-size:14px;color:#101828;font-weight:400;letter-spacing:0px;font-family:"Liberation Sans", sans-serif;">Ingrid</div>
<div class="t" style="left:632.5px;top:920.15px;font-size:14px;color:#1f1f1f;font-weight:400;letter-spacing:0px;font-family:"Liberation Sans", sans-serif;">Defective Product</div>
<div class="t" style="left:848.6px;top:920.15px;font-size:14px;color:#1f1f1f;font-weight:400;letter-spacing:0.65px;font-family:"Liberation Sans", sans-serif;">2011/04/25</div>
<div class="t" style="left:1039.0px;top:920.15px;font-size:14px;color:#1f1f1f;font-weight:400;letter-spacing:0.65px;font-family:"Liberation Sans", sans-serif;">2011/04/25</div>
<div class="t" style="left:1251.0px;top:920.15px;font-size:14px;color:#1f1f1f;font-weight:400;letter-spacing:0.65px;font-family:"Liberation Sans", sans-serif;">2017/10/05</div>
<svg class="ic" width="16" height="18" viewBox="0 0 16 18" style="left:1419px;top:916px"><path d="M5.3 2.6 L5.3 2 Q5.3 0.8 6.8 0.8 L9.2 0.8 Q10.7 0.8 10.7 2 L10.7 2.6 M0.5 3 L15.5 3 M2.2 3.5 L2.2 16.2 Q2.2 17.2 3.2 17.2 L12.8 17.2 Q13.8 17.2 13.8 16.2 L13.8 3.5 M6.2 6.5 L6.2 13.5 M9.8 6.5 L9.8 13.5" fill="none" stroke="#3b3d33" stroke-width="1.6"/></svg>
<div class="abs" style="left:309px;top:954px;width:1219px;height:1px;background:#e3e3e3"></div>
<div class="abs" style="left:309px;top:955px;width:1219px;height:46px;background:#ffffff"></div>
<div class="t" style="left:317.7px;top:967.15px;font-size:14px;color:#1f1f1f;font-weight:400;letter-spacing:0.1px;font-family:"Liberation Sans", sans-serif;">110</div>
<svg class="ic" width="30" height="30" viewBox="0 0 30 30" style="left:402px;top:963px"><circle cx="15" cy="15" r="15" fill="#fff" opacity="0.9"/><defs><clipPath id="cbdark2963"><path d="M1 20.5 C1.5 15 4 11 8 8.5 C11 5.5 15 4.5 19 6 C23 7.5 25.5 11 27 15 C28 17 29 19 28.5 21 C26 23.5 22 24.5 16 24 C10 24.5 5 24 1 20.5Z"/></clipPath></defs><path d="M1 20.5 C1.5 15 4 11 8 8.5 C11 5.5 15 4.5 19 6 C23 7.5 25.5 11 27 15 C28 17 29 19 28.5 21 C26 23.5 22 24.5 16 24 C10 24.5 5 24 1 20.5Z" fill="#5f5f38"/><g clip-path="url(#cbdark2963)"><circle cx="26.8" cy="9.2" r="1.1" fill="#34341e" opacity="0.7"/><circle cx="6.9" cy="11.8" r="1.0" fill="#34341e" opacity="0.7"/><circle cx="21.2" cy="23.7" r="1.1" fill="#34341e" opacity="0.7"/><circle cx="11.7" cy="15.0" r="1.7" fill="#34341e" opacity="0.7"/><circle cx="6.0" cy="19.7" r="1.0" fill="#34341e" opacity="0.7"/><circle cx="9.9" cy="13.2" r="1.1" fill="#34341e" opacity="0.7"/><circle cx="4.2" cy="20.2" r="1.3" fill="#34341e" opacity="0.7"/><circle cx="18.6" cy="10.5" r="1.5" fill="#9c9a6c" opacity="0.7"/><circle cx="19.9" cy="4.5" r="1.0" fill="#34341e" opacity="0.7"/><circle cx="16.3" cy="4.7" r="0.9" fill="#9c9a6c" opacity="0.7"/><circle cx="14.7" cy="17.0" r="1.5" fill="#34341e" opacity="0.7"/><circle cx="13.8" cy="11.8" r="0.8" fill="#34341e" opacity="0.7"/><circle cx="22.8" cy="12.5" r="1.6" fill="#34341e" opacity="0.7"/><circle cx="22.8" cy="21.6" r="0.9" fill="#34341e" opacity="0.7"/><circle cx="22.3" cy="22.5" r="1.0" fill="#34341e" opacity="0.7"/><circle cx="29.0" cy="15.1" r="0.6" fill="#34341e" opacity="0.7"/><circle cx="21.0" cy="6.1" r="0.7" fill="#34341e" opacity="0.7"/><circle cx="6.2" cy="22.3" r="0.6" fill="#34341e" opacity="0.7"/><circle cx="25.3" cy="6.1" r="0.8" fill="#34341e" opacity="0.7"/><circle cx="24.7" cy="5.7" r="0.8" fill="#9c9a6c" opacity="0.7"/><circle cx="23.9" cy="24.7" r="1.5" fill="#34341e" opacity="0.7"/><circle cx="17.9" cy="10.2" r="1.0" fill="#9c9a6c" opacity="0.7"/><circle cx="7.7" cy="7.6" r="0.6" fill="#34341e" opacity="0.7"/><circle cx="7.3" cy="24.5" r="1.8" fill="#34341e" opacity="0.7"/><circle cx="21.9" cy="19.9" r="1.3" fill="#34341e" opacity="0.7"/><circle cx="21.0" cy="12.1" r="1.6" fill="#34341e" opacity="0.7"/><circle cx="24.1" cy="18.8" r="1.2" fill="#34341e" opacity="0.7"/><circle cx="16.4" cy="21.4" r="1.4" fill="#9c9a6c" opacity="0.7"/><circle cx="26.1" cy="23.1" r="1.7" fill="#9c9a6c" opacity="0.7"/><circle cx="21.3" cy="23.7" r="1.7" fill="#34341e" opacity="0.7"/><circle cx="24.7" cy="16.7" r="1.7" fill="#34341e" opacity="0.7"/><circle cx="5.4" cy="4.2" r="1.3" fill="#9c9a6c" opacity="0.7"/><circle cx="16.5" cy="24.1" r="1.0" fill="#34341e" opacity="0.7"/><circle cx="28.1" cy="22.1" r="1.1" fill="#9c9a6c" opacity="0.7"/><circle cx="19.5" cy="12.5" r="0.6" fill="#9c9a6c" opacity="0.7"/><circle cx="6.5" cy="5.4" r="1.5" fill="#34341e" opacity="0.7"/><circle cx="13.1" cy="5.6" r="0.9" fill="#9c9a6c" opacity="0.7"/><circle cx="17.8" cy="12.7" r="1.0" fill="#9c9a6c" opacity="0.7"/><circle cx="10.2" cy="22.3" r="0.9" fill="#9c9a6c" opacity="0.7"/><circle cx="24.3" cy="23.4" r="1.4" fill="#9c9a6c" opacity="0.7"/><circle cx="6.5" cy="17.4" r="0.9" fill="#34341e" opacity="0.7"/><circle cx="20.4" cy="9.0" r="0.7" fill="#34341e" opacity="0.7"/><circle cx="5.6" cy="14.2" r="1.3" fill="#34341e" opacity="0.7"/><circle cx="4.1" cy="24.0" r="1.1" fill="#9c9a6c" opacity="0.7"/><circle cx="16.2" cy="7.3" r="1.8" fill="#34341e" opacity="0.7"/><circle cx="1.0" cy="13.5" r="1.3" fill="#34341e" opacity="0.7"/><circle cx="22.5" cy="4.1" r="1.2" fill="#34341e" opacity="0.7"/><circle cx="18.4" cy="14.3" r="0.9" fill="#34341e" opacity="0.7"/><circle cx="7.3" cy="4.8" r="0.8" fill="#34341e" opacity="0.7"/><circle cx="11.7" cy="4.6" r="1.7" fill="#9c9a6c" opacity="0.7"/><circle cx="2.4" cy="20.4" r="0.7" fill="#34341e" opacity="0.7"/><circle cx="12.7" cy="18.4" r="1.8" fill="#34341e" opacity="0.7"/><circle cx="3.2" cy="21.9" r="1.4" fill="#9c9a6c" opacity="0.7"/><circle cx="16.9" cy="7.2" r="0.7" fill="#34341e" opacity="0.7"/><circle cx="21.8" cy="11.0" r="1.5" fill="#9c9a6c" opacity="0.7"/><circle cx="23.6" cy="8.2" r="1.3" fill="#34341e" opacity="0.7"/><circle cx="24.0" cy="5.0" r="1.3" fill="#9c9a6c" opacity="0.7"/><circle cx="7.6" cy="24.6" r="1.6" fill="#9c9a6c" opacity="0.7"/><circle cx="4.1" cy="12.3" r="1.1" fill="#34341e" opacity="0.7"/><circle cx="12.8" cy="15.5" r="1.0" fill="#9c9a6c" opacity="0.7"/><circle cx="27.7" cy="24.7" r="1.4" fill="#34341e" opacity="0.7"/><circle cx="16.4" cy="4.2" r="1.8" fill="#34341e" opacity="0.7"/><circle cx="4.2" cy="21.6" r="1.4" fill="#34341e" opacity="0.7"/><circle cx="9.6" cy="18.6" r="1.0" fill="#9c9a6c" opacity="0.7"/><circle cx="24.1" cy="20.9" r="1.6" fill="#34341e" opacity="0.7"/><circle cx="17.5" cy="6.3" r="1.2" fill="#34341e" opacity="0.7"/><circle cx="27.8" cy="23.0" r="0.9" fill="#9c9a6c" opacity="0.7"/><circle cx="5.8" cy="15.6" r="1.2" fill="#34341e" opacity="0.7"/><circle cx="28.5" cy="24.0" r="1.5" fill="#34341e" opacity="0.7"/><circle cx="9.3" cy="17.9" r="1.7" fill="#34341e" opacity="0.7"/></g></svg>
<div class="t" style="left:437.0px;top:970.05px;font-size:14px;color:#101828;font-weight:400;letter-spacing:0px;font-family:"Liberation Sans", sans-serif;">Low Rider</div>
<div class="t" style="left:632.5px;top:967.15px;font-size:14px;color:#1f1f1f;font-weight:400;letter-spacing:0px;font-family:"Liberation Sans", sans-serif;">Wrong Product</div>
<div class="t" style="left:848.6px;top:967.15px;font-size:14px;color:#1f1f1f;font-weight:400;letter-spacing:0.65px;font-family:"Liberation Sans", sans-serif;">2011/04/25</div>
<div class="t" style="left:1039.0px;top:967.15px;font-size:14px;color:#1f1f1f;font-weight:400;letter-spacing:0.65px;font-family:"Liberation Sans", sans-serif;">2011/04/25</div>
<div class="t" style="left:1251.0px;top:967.15px;font-size:14px;color:#1f1f1f;font-weight:400;letter-spacing:0.65px;font-family:"Liberation Sans", sans-serif;">2020/05/03</div>
<svg class="ic" width="16" height="18" viewBox="0 0 16 18" style="left:1419px;top:963px"><path d="M5.3 2.6 L5.3 2 Q5.3 0.8 6.8 0.8 L9.2 0.8 Q10.7 0.8 10.7 2 L10.7 2.6 M0.5 3 L15.5 3 M2.2 3.5 L2.2 16.2 Q2.2 17.2 3.2 17.2 L12.8 17.2 Q13.8 17.2 13.8 16.2 L13.8 3.5 M6.2 6.5 L6.2 13.5 M9.8 6.5 L9.8 13.5" fill="none" stroke="#3b3d33" stroke-width="1.6"/></svg>
<div class="abs" style="left:309px;top:1001px;width:1219px;height:1px;background:#e3e3e3"></div>
<div class="t" style="left:309.5px;top:1024.15px;font-size:14px;color:#6c6f7a;font-weight:400;letter-spacing:0.05px;font-family:"Liberation Sans", sans-serif;">Showing 1 to 10 of 15 entries</div>
<div class="abs" style="left:1286px;top:1010px;width:88px;height:38px;border:1px solid #e0e0e6;border-radius:4px;background:#eceef1"></div>
<div class="t" style="left:1299.2px;top:1021.86px;font-size:16px;color:#3c3b52;font-weight:400;letter-spacing:-0.1px;font-family:"Liberation Sans", sans-serif;">Previous</div>
<div class="abs" style="left:1380px;top:1010px;width:35px;height:38px;background:#e8702a"></div>
<div class="t" style="left:1393.0px;top:1021.86px;font-size:16px;color:#fff;font-weight:400;letter-spacing:0px;font-family:"Liberation Sans", sans-serif;-webkit-text-stroke:0.4px #fff;">1</div>
<div class="abs" style="left:1421px;top:1010px;width:35px;height:38px;border:1px solid #e3e3e3;background:#fff"></div>
<div class="t" style="left:1433.5px;top:1021.86px;font-size:16px;color:#3c3b52;font-weight:400;letter-spacing:0px;font-family:"Liberation Sans", sans-serif;">2</div>
<div class="abs" style="left:1462px;top:1010px;width:58.5px;height:38px;border:1px solid #e3e3e3;border-radius:4px;background:#fff"></div>
<div class="t" style="left:1475.7px;top:1021.86px;font-size:16px;color:#3c3b52;font-weight:400;letter-spacing:-0.1px;font-family:"Liberation Sans", sans-serif;">Next</div>
<div class="abs" style="left:1576px;top:0;width:6px;height:1134px;background:linear-gradient(to right,rgba(60,60,100,0),rgba(60,60,100,0.16));z-index:5"></div></body></html>
